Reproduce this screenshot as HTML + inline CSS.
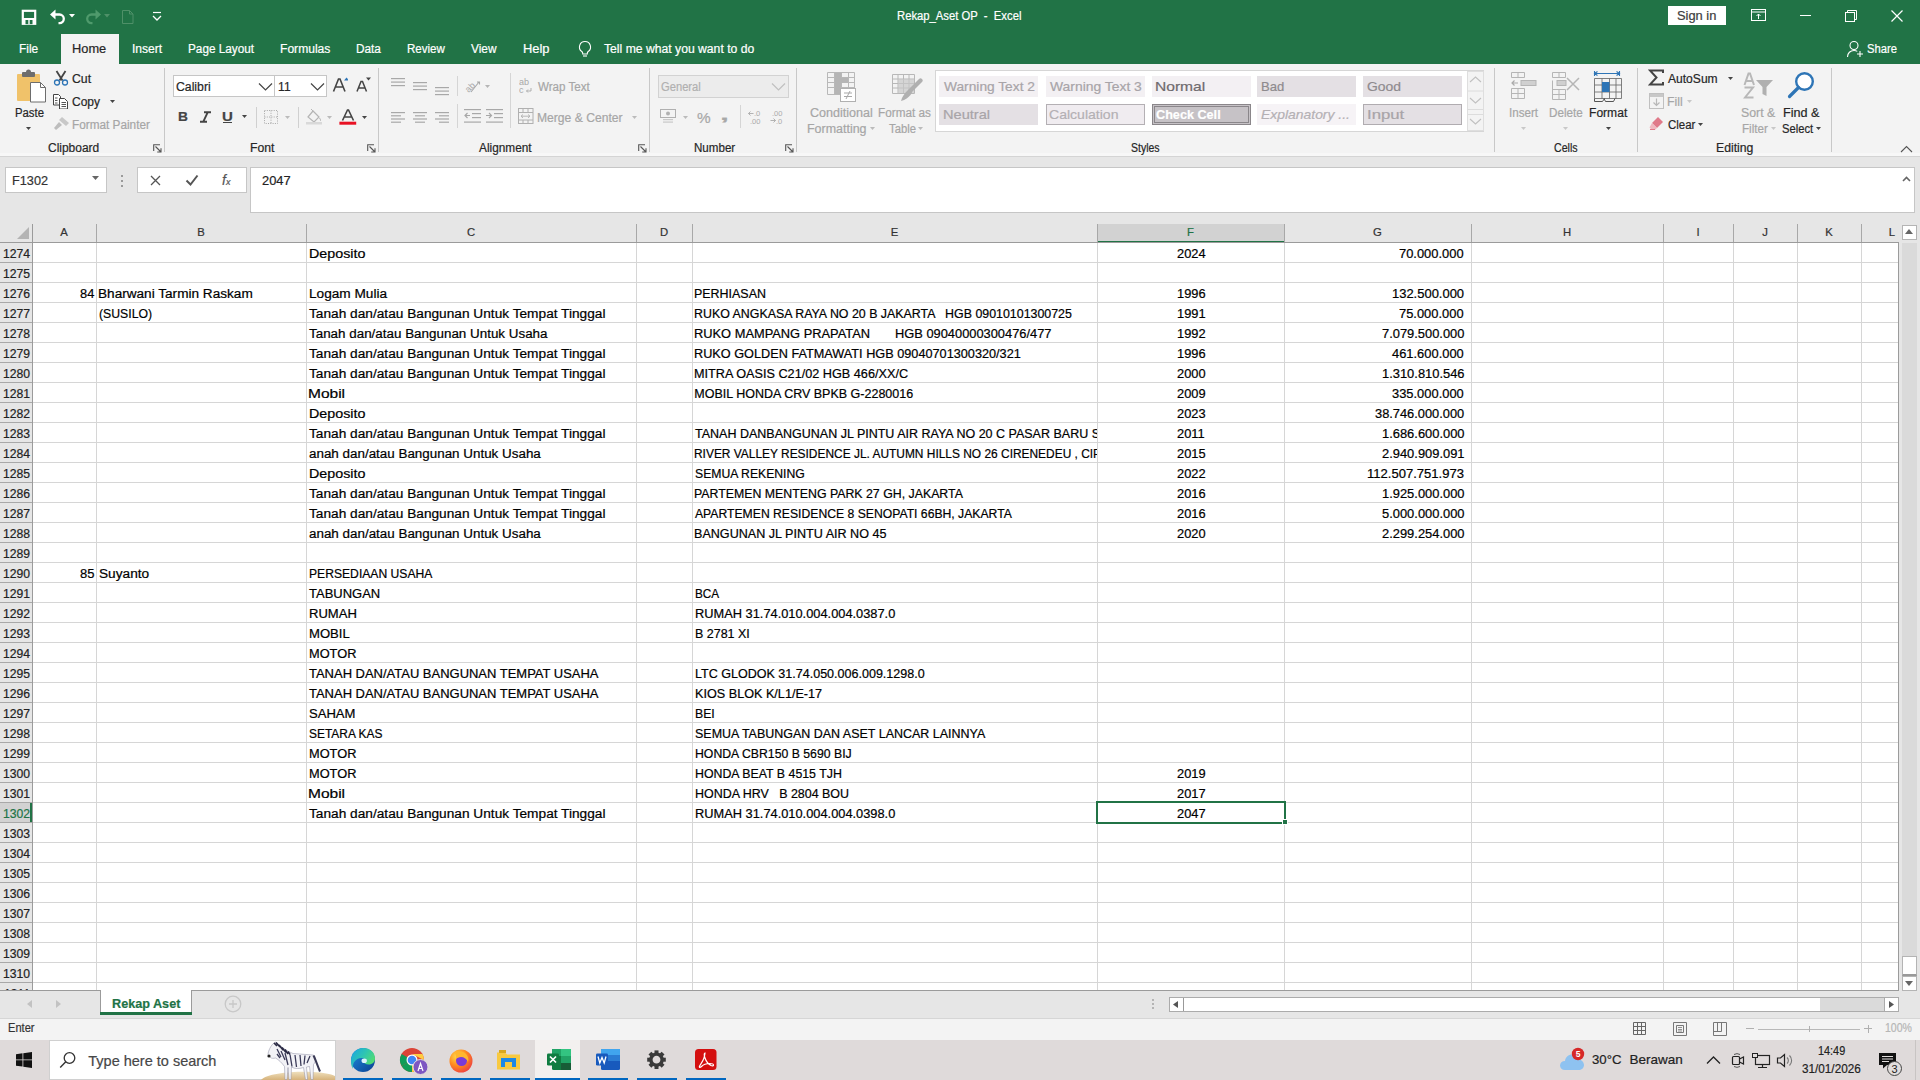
<!DOCTYPE html><html><head><meta charset="utf-8"><title>Rekap_Aset OP - Excel</title><style>*{margin:0;padding:0}html,body{width:1920px;height:1080px;overflow:hidden;background:#fff}body{position:relative;font-family:"Liberation Sans",sans-serif}.b{position:absolute;display:block}.t{position:absolute;white-space:nowrap;-webkit-text-stroke:0.2px currentColor}</style></head><body><div class="b" style="left:0px;top:0px;width:1920px;height:64px;background:#217346"></div>
<svg class="b" style="left:20px;top:8px" width="18" height="18" viewBox="0 0 18 18"><rect x="2.8" y="2.8" width="12.4" height="13" fill="none" stroke="#fff" stroke-width="2.2"/><rect x="2.5" y="10" width="13" height="6" fill="#fff"/><rect x="5.5" y="12" width="7" height="4.2" fill="#217346"/><rect x="8.3" y="12" width="1.4" height="4.2" fill="#fff"/></svg>
<svg class="b" style="left:49px;top:8px" width="18" height="18" viewBox="0 0 18 18"><path d="M5 6.5h5.5a4.3 4.3 0 0 1 0 8.6H9.5" fill="none" stroke="#fff" stroke-width="2.3"/><path d="M1 6.5L6.5 1.5v10z" fill="#fff"/></svg>
<svg class="b" style="left:69px;top:14px" width="8" height="5" viewBox="0 0 8 5"><path d="M0 0h6l-3 3.5z" fill="#fff"/></svg>
<svg class="b" style="left:84px;top:8px" width="18" height="18" viewBox="0 0 18 18"><path d="M13 6.5H7.5a4.3 4.3 0 0 0 0 8.6H8.5" fill="none" stroke="#4f9a6c" stroke-width="2.3"/><path d="M17 6.5L11.5 1.5v10z" fill="#4f9a6c"/></svg>
<svg class="b" style="left:104px;top:14px" width="8" height="5" viewBox="0 0 8 5"><path d="M0 0h6l-3 3.5z" fill="#4f9068"/></svg>
<svg class="b" style="left:121px;top:9px" width="14" height="16" viewBox="0 0 14 16"><path d="M1.5 1.5h7l3.5 3.5v9.5h-10.5z M8.5 1.5v3.5h3.5" fill="none" stroke="#4f9068" stroke-width="1"/></svg>
<svg class="b" style="left:151px;top:11px" width="12" height="12" viewBox="0 0 12 12"><path d="M2 1.5h8" stroke="#fff" stroke-width="1.2"/><path d="M2 5l4 4 4-4" fill="none" stroke="#fff" stroke-width="1.3"/></svg>
<div id="t1" class="t" style="left:897.11px;top:10.34px;font-size:12.00px;line-height:12.00px;color:#fff;font-weight:normal;transform:scaleX(0.9389);transform-origin:0 0;">Rekap_Aset OP &nbsp;- &nbsp;Excel</div>
<div class="b" style="left:1668px;top:6px;width:58px;height:19px;background:#fff"></div>
<div id="t2" class="t" style="left:1677.46px;top:9.84px;font-size:12.00px;line-height:12.00px;color:#404040;font-weight:normal;transform:scaleX(1.0729);transform-origin:0 0;">Sign in</div>
<svg class="b" style="left:1750px;top:8px" width="18" height="14" viewBox="0 0 18 14"><rect x="1.5" y="1.5" width="14" height="11" fill="none" stroke="#fff" stroke-width="1"/><path d="M1.5 4h14" stroke="#fff"/><path d="M8.5 11V6M6.5 8l2-2 2 2" fill="none" stroke="#fff" stroke-width="1"/></svg>
<div class="b" style="left:1800px;top:15px;width:11px;height:1px;background:#fff"></div>
<svg class="b" style="left:1844px;top:9px" width="14" height="14" viewBox="0 0 14 14"><rect x="1.5" y="3.5" width="9" height="9" fill="none" stroke="#fff"/><path d="M3.5 3.5V1.5h9v9h-2" fill="none" stroke="#fff"/></svg>
<svg class="b" style="left:1890px;top:9px" width="14" height="14" viewBox="0 0 14 14"><path d="M1.5 1.5l11 11M12.5 1.5l-11 11" stroke="#fff" stroke-width="1.2"/></svg>
<div class="b" style="left:61px;top:34px;width:58px;height:30px;background:#f3f3f3"></div>
<div id="t3" class="t" style="left:19.36px;top:42.84px;font-size:12.00px;line-height:12.00px;color:#fff;font-weight:normal;transform:scaleX(0.9909);transform-origin:0 0;">File</div>
<div id="t4" class="t" style="left:72.39px;top:42.84px;font-size:12.00px;line-height:12.00px;color:#262626;font-weight:normal;transform:scaleX(1.0676);transform-origin:0 0;">Home</div>
<div id="t5" class="t" style="left:131.89px;top:42.84px;font-size:12.00px;line-height:12.00px;color:#fff;font-weight:normal;transform:scaleX(1.0060);transform-origin:0 0;">Insert</div>
<div id="t6" class="t" style="left:188.07px;top:42.84px;font-size:12.00px;line-height:12.00px;color:#fff;font-weight:normal;transform:scaleX(0.9796);transform-origin:0 0;">Page Layout</div>
<div id="t7" class="t" style="left:280.04px;top:42.84px;font-size:12.00px;line-height:12.00px;color:#fff;font-weight:normal;transform:scaleX(1.0070);transform-origin:0 0;">Formulas</div>
<div id="t8" class="t" style="left:356.07px;top:42.84px;font-size:12.00px;line-height:12.00px;color:#fff;font-weight:normal;transform:scaleX(0.9826);transform-origin:0 0;">Data</div>
<div id="t9" class="t" style="left:407.09px;top:42.84px;font-size:12.00px;line-height:12.00px;color:#fff;font-weight:normal;transform:scaleX(0.9628);transform-origin:0 0;">Review</div>
<div id="t10" class="t" style="left:471.45px;top:42.84px;font-size:12.00px;line-height:12.00px;color:#fff;font-weight:normal;transform:scaleX(0.9893);transform-origin:0 0;">View</div>
<div id="t11" class="t" style="left:522.98px;top:42.84px;font-size:12.00px;line-height:12.00px;color:#fff;font-weight:normal;transform:scaleX(1.0750);transform-origin:0 0;">Help</div>
<svg class="b" style="left:577px;top:40px" width="16" height="18" viewBox="0 0 16 18"><path d="M8 1.5a5.5 5.5 0 0 0-3.2 10c.6.5.9 1.1.9 1.8v.7h4.6v-.7c0-.7.3-1.3.9-1.8A5.5 5.5 0 0 0 8 1.5z" fill="none" stroke="#fff" stroke-width="1.1"/><path d="M6 16h4" stroke="#fff" stroke-width="1.1"/></svg>
<div id="t12" class="t" style="left:604.25px;top:42.84px;font-size:12.00px;line-height:12.00px;color:#fff;font-weight:normal;transform:scaleX(1.0146);transform-origin:0 0;">Tell me what you want to do</div>
<svg class="b" style="left:1846px;top:40px" width="18" height="18" viewBox="0 0 18 18"><circle cx="8" cy="5.5" r="4" fill="none" stroke="#fff" stroke-width="1.1"/><path d="M1.5 17c0-4 2.8-6.5 6.5-6.5 1.3 0 2.4.3 3.3.9" fill="none" stroke="#fff" stroke-width="1.1"/><path d="M14 11v6M11 14h6" stroke="#fff" stroke-width="1.1"/></svg>
<div id="t13" class="t" style="left:1866.53px;top:42.84px;font-size:12.00px;line-height:12.00px;color:#fff;font-weight:normal;transform:scaleX(0.9356);transform-origin:0 0;">Share</div>
<div class="b" style="left:0px;top:64px;width:1920px;height:92px;background:#f3f3f3"></div>
<div class="b" style="left:0px;top:153px;width:1920px;height:3px;background:#f7f7f7"></div>
<div class="b" style="left:0px;top:156px;width:1920px;height:1px;background:#d4d4d4"></div>
<div class="b" style="left:164px;top:68px;width:1px;height:84px;background:#c8c8c8"></div>
<div class="b" style="left:378px;top:68px;width:1px;height:84px;background:#c8c8c8"></div>
<div class="b" style="left:649px;top:68px;width:1px;height:84px;background:#c8c8c8"></div>
<div class="b" style="left:796px;top:68px;width:1px;height:84px;background:#c8c8c8"></div>
<div class="b" style="left:1494px;top:68px;width:1px;height:84px;background:#c8c8c8"></div>
<div class="b" style="left:1637px;top:68px;width:1px;height:84px;background:#c8c8c8"></div>
<div class="b" style="left:1831px;top:68px;width:1px;height:84px;background:#c8c8c8"></div>
<div id="t14" class="t" style="left:47.90px;top:141.84px;font-size:12.00px;line-height:12.00px;color:#262626;font-weight:normal;transform:scaleX(0.9972);transform-origin:0 0;">Clipboard</div>
<div id="t15" class="t" style="left:250.33px;top:141.84px;font-size:12.00px;line-height:12.00px;color:#262626;font-weight:normal;transform:scaleX(1.0184);transform-origin:0 0;">Font</div>
<div id="t16" class="t" style="left:479.30px;top:141.84px;font-size:12.00px;line-height:12.00px;color:#262626;font-weight:normal;transform:scaleX(0.9854);transform-origin:0 0;">Alignment</div>
<div id="t17" class="t" style="left:693.78px;top:141.84px;font-size:12.00px;line-height:12.00px;color:#262626;font-weight:normal;transform:scaleX(0.9655);transform-origin:0 0;">Number</div>
<div id="t18" class="t" style="left:1131.16px;top:141.84px;font-size:12.00px;line-height:12.00px;color:#262626;font-weight:normal;transform:scaleX(0.8748);transform-origin:0 0;">Styles</div>
<div id="t19" class="t" style="left:1554.17px;top:141.84px;font-size:12.00px;line-height:12.00px;color:#262626;font-weight:normal;transform:scaleX(0.8881);transform-origin:0 0;">Cells</div>
<div id="t20" class="t" style="left:1715.63px;top:141.84px;font-size:12.00px;line-height:12.00px;color:#262626;font-weight:normal;transform:scaleX(1.0195);transform-origin:0 0;">Editing</div>
<svg class="b" style="left:153px;top:144px" width="9" height="9" viewBox="0 0 9 9"><path d="M.7 7V.7H7" fill="none" stroke="#555" stroke-width="1.1"/><path d="M2.5 2.5l5 5M8 4.2V8H4.2" fill="none" stroke="#555" stroke-width="1.1"/></svg>
<svg class="b" style="left:367px;top:144px" width="9" height="9" viewBox="0 0 9 9"><path d="M.7 7V.7H7" fill="none" stroke="#555" stroke-width="1.1"/><path d="M2.5 2.5l5 5M8 4.2V8H4.2" fill="none" stroke="#555" stroke-width="1.1"/></svg>
<svg class="b" style="left:638px;top:144px" width="9" height="9" viewBox="0 0 9 9"><path d="M.7 7V.7H7" fill="none" stroke="#555" stroke-width="1.1"/><path d="M2.5 2.5l5 5M8 4.2V8H4.2" fill="none" stroke="#555" stroke-width="1.1"/></svg>
<svg class="b" style="left:785px;top:144px" width="9" height="9" viewBox="0 0 9 9"><path d="M.7 7V.7H7" fill="none" stroke="#555" stroke-width="1.1"/><path d="M2.5 2.5l5 5M8 4.2V8H4.2" fill="none" stroke="#555" stroke-width="1.1"/></svg>
<svg class="b" style="left:15px;top:69px" width="32" height="34" viewBox="0 0 32 34"><rect x="2" y="5" width="23" height="27" rx="1" fill="#f0c26a"/><rect x="7" y="3" width="13" height="5" rx="1" fill="#6d6d6d"/><circle cx="13.5" cy="3" r="2.5" fill="#6d6d6d"/><path d="M15.5 13.5h10l5 5v14.5h-15z" fill="#fff" stroke="#6d6d6d" stroke-width="1"/><path d="M25.5 13.5v5h5" fill="none" stroke="#6d6d6d" stroke-width="1"/></svg>
<div id="t21" class="t" style="left:14.50px;top:106.84px;font-size:12.00px;line-height:12.00px;color:#262626;font-weight:normal;transform:scaleX(0.9448);transform-origin:0 0;">Paste</div>
<svg class="b" style="left:26px;top:127px" width="6" height="4" viewBox="0 0 6 4"><path d="M0 0h5l-2.5 3z" fill="#444"/></svg>
<svg class="b" style="left:53px;top:70px" width="16" height="16" viewBox="0 0 16 16"><path d="M3.5 1l6 9.5M12.5 1l-6 9.5" stroke="#444" stroke-width="1.8"/><circle cx="4" cy="12.5" r="2.5" fill="none" stroke="#2e75b6" stroke-width="1.3"/><circle cx="12" cy="12.5" r="2.5" fill="none" stroke="#2e75b6" stroke-width="1.3"/></svg>
<div id="t22" class="t" style="left:71.99px;top:73.04px;font-size:12.00px;line-height:12.00px;color:#262626;font-weight:normal;transform:scaleX(1.0228);transform-origin:0 0;">Cut</div>
<svg class="b" style="left:53px;top:93px" width="16" height="16" viewBox="0 0 16 16"><path d="M.5 1.5h5l2 2v8.5H.5z" fill="#fff" stroke="#444"/><path d="M6.5 5.5h5l3 3v7.5h-8z" fill="#fff" stroke="#444"/><path d="M2 5h2.5M2 7.5h2.5M2 10h2.5M8.5 9.5h4.5M8.5 11.5h4.5M8.5 13.5h4.5" stroke="#444" stroke-width=".9"/></svg>
<div id="t23" class="t" style="left:72.00px;top:95.84px;font-size:12.00px;line-height:12.00px;color:#262626;font-weight:normal;">Copy</div>
<svg class="b" style="left:110px;top:100px" width="6" height="4" viewBox="0 0 6 4"><path d="M0 0h5l-2.5 3z" fill="#444"/></svg>
<svg class="b" style="left:53px;top:116px" width="17" height="15" viewBox="0 0 17 15"><path d="M9 1l7 6-3 3-7-6z" fill="#c8c8c8"/><path d="M6 6l-5 6 2 2 6-5z" fill="#bdbdbd"/></svg>
<div id="t24" class="t" style="left:71.67px;top:118.74px;font-size:12.00px;line-height:12.00px;color:#a6a6a6;font-weight:normal;transform:scaleX(0.9819);transform-origin:0 0;">Format Painter</div>
<div class="b" style="left:173px;top:75px;width:102px;height:22px;background:#fff;border:1px solid #c6c6c6;box-sizing:border-box"></div>
<div class="b" style="left:274px;top:75px;width:53px;height:22px;background:#fff;border:1px solid #c6c6c6;box-sizing:border-box"></div>
<div id="t25" class="t" style="left:175.89px;top:80.84px;font-size:12.00px;line-height:12.00px;color:#262626;font-weight:normal;transform:scaleX(1.0202);transform-origin:0 0;">Calibri</div>
<div id="t26" class="t" style="left:278.10px;top:80.84px;font-size:12.00px;line-height:12.00px;color:#262626;font-weight:normal;">11</div>
<svg class="b" style="left:258px;top:82px" width="15" height="10" viewBox="0 0 15 10"><path d="M1 1.5l6.5 6.5 6.5-6.5" fill="none" stroke="#444" stroke-width="1.2"/></svg>
<svg class="b" style="left:309.7px;top:82px" width="15" height="10" viewBox="0 0 15 10"><path d="M1 1.5l6.5 6.5 6.5-6.5" fill="none" stroke="#444" stroke-width="1.2"/></svg>
<svg class="b" style="left:332px;top:76px" width="16" height="17" viewBox="0 0 16 17"><path d="M1.5 15.5l5-12.5h1.5l5 12.5M3.5 11h8" fill="none" stroke="#444" stroke-width="1.6"/><path d="M12 4.5l2.5-3 2.5 3z" fill="#2e75b6"/></svg>
<svg class="b" style="left:355px;top:76px" width="16" height="17" viewBox="0 0 16 17"><path d="M2 15.5l4-10h1.5l4 10M3.8 12h6" fill="none" stroke="#444" stroke-width="1.5"/><path d="M11 1.5h5l-2.5 3z" fill="#444"/></svg>
<div id="t27" class="t" style="left:178.14px;top:110.00px;font-size:13.00px;line-height:13.00px;color:#444;font-weight:normal;transform:scaleX(1.0585);transform-origin:0 0;"><b>B</b></div>
<svg class="b" style="left:199px;top:111px" width="13" height="12" viewBox="0 0 13 12"><path d="M5 1.2h7M1 10.8h7M8.8 1.2L4.2 10.8" fill="none" stroke="#444" stroke-width="1.9"/></svg>
<div id="t28" class="t" style="left:222.29px;top:110.00px;font-size:13.00px;line-height:13.00px;color:#444;font-weight:normal;transform:scaleX(1.1569);transform-origin:0 0;"><b>U</b></div>
<div class="b" style="left:222.6px;top:122px;width:9.4px;height:1.3px;background:#444"></div>
<svg class="b" style="left:242px;top:115px" width="6" height="4" viewBox="0 0 6 4"><path d="M0 0h5l-2.5 3z" fill="#444"/></svg>
<div class="b" style="left:255.5px;top:106.5px;width:1px;height:21px;background:#d0d0d0"></div>
<svg class="b" style="left:264px;top:110px" width="14" height="14" viewBox="0 0 14 14"><path d="M.5 .5h13v13H.5zM7 .5v13M.5 7h13" fill="none" stroke="#a8a8a8" stroke-width="1" stroke-dasharray="1 1.3"/></svg>
<svg class="b" style="left:285px;top:116px" width="6" height="4" viewBox="0 0 6 4"><path d="M0 0h5l-2.5 3z" fill="#bbb"/></svg>
<div class="b" style="left:298px;top:106.5px;width:1px;height:21px;background:#d0d0d0"></div>
<svg class="b" style="left:305px;top:108px" width="18" height="17" viewBox="0 0 18 17"><path d="M3 9l5-6 6 6-5 5z" fill="none" stroke="#b5b5b5" stroke-width="1.2"/><path d="M8 3l-2-2" stroke="#b5b5b5"/><path d="M14.5 10c1 1.5 1.5 2.5.5 3" fill="none" stroke="#b5b5b5"/><rect x="1" y="14" width="16" height="2.5" fill="#d9d9d9"/></svg>
<svg class="b" style="left:327px;top:116px" width="6" height="4" viewBox="0 0 6 4"><path d="M0 0h5l-2.5 3z" fill="#bbb"/></svg>
<svg class="b" style="left:339px;top:109px" width="18" height="16" viewBox="0 0 18 16"><path d="M3.5 11.5l5-10.5h1l5 10.5M5.5 8h7" fill="none" stroke="#444" stroke-width="1.6"/><rect x="0.4" y="12.7" width="16.8" height="3" fill="#e81123"/></svg>
<svg class="b" style="left:361.8px;top:116px" width="6" height="4" viewBox="0 0 6 4"><path d="M0 0h5l-2.5 3z" fill="#444"/></svg>
<svg class="b" style="left:391px;top:77.5px" width="16" height="12" viewBox="0 0 16 12"><rect x="0" y="0.0" width="14" height="1.2" fill="#a8a8a8"/><rect x="0" y="3.5" width="14" height="1.2" fill="#a8a8a8"/><rect x="0" y="7.0" width="14" height="1.2" fill="#a8a8a8"/></svg>
<svg class="b" style="left:413px;top:82px" width="16" height="12" viewBox="0 0 16 12"><rect x="0" y="0.0" width="14" height="1.2" fill="#a8a8a8"/><rect x="0" y="3.5" width="14" height="1.2" fill="#a8a8a8"/><rect x="0" y="7.0" width="14" height="1.2" fill="#a8a8a8"/></svg>
<svg class="b" style="left:435px;top:86.5px" width="16" height="12" viewBox="0 0 16 12"><rect x="0" y="0.0" width="14" height="1.2" fill="#a8a8a8"/><rect x="0" y="3.5" width="14" height="1.2" fill="#a8a8a8"/><rect x="0" y="7.0" width="14" height="1.2" fill="#a8a8a8"/></svg>
<div class="b" style="left:457px;top:76px;width:1px;height:20px;background:#d5d5d5"></div>
<svg class="b" style="left:464px;top:77px" width="28" height="17" viewBox="0 0 28 17"><text x="0" y="13" font-family="Liberation Sans" font-size="9" fill="#a8a8a8" transform="rotate(-45 6 9)">ab</text><path d="M7 15l8-10M13 5h2.5v2.5" fill="none" stroke="#a8a8a8" stroke-width="1.1"/><path d="M21 8h5l-2.5 3z" fill="#b5b5b5"/></svg>
<svg class="b" style="left:391px;top:112px" width="16" height="14" viewBox="0 0 16 14"><rect x="0" y="0.0" width="14" height="1.2" fill="#a8a8a8"/><rect x="0" y="3.2" width="10" height="1.2" fill="#a8a8a8"/><rect x="0" y="6.4" width="14" height="1.2" fill="#a8a8a8"/><rect x="0" y="9.600000000000001" width="10" height="1.2" fill="#a8a8a8"/></svg>
<svg class="b" style="left:413px;top:112px" width="16" height="14" viewBox="0 0 16 14"><rect x="0" y="0.0" width="14" height="1.2" fill="#a8a8a8"/><rect x="2" y="3.2" width="10" height="1.2" fill="#a8a8a8"/><rect x="0" y="6.4" width="14" height="1.2" fill="#a8a8a8"/><rect x="2" y="9.600000000000001" width="10" height="1.2" fill="#a8a8a8"/></svg>
<svg class="b" style="left:435px;top:112px" width="16" height="14" viewBox="0 0 16 14"><rect x="0" y="0.0" width="14" height="1.2" fill="#a8a8a8"/><rect x="4" y="3.2" width="10" height="1.2" fill="#a8a8a8"/><rect x="0" y="6.4" width="14" height="1.2" fill="#a8a8a8"/><rect x="4" y="9.600000000000001" width="10" height="1.2" fill="#a8a8a8"/></svg>
<div class="b" style="left:457px;top:104px;width:1px;height:24px;background:#d5d5d5"></div>
<svg class="b" style="left:464px;top:109px" width="42" height="15" viewBox="0 0 42 15"><rect x="0" y="0" width="17" height="1.2" fill="#a8a8a8"/><rect x="8" y="4" width="9" height="1.2" fill="#a8a8a8"/><rect x="8" y="8" width="9" height="1.2" fill="#a8a8a8"/><rect x="0" y="12.5" width="17" height="1.2" fill="#a8a8a8"/><path d="M1 6.5h5M3.5 4l-2.5 2.5 2.5 2.5" fill="none" stroke="#a8a8a8" stroke-width="1.2"/><g transform="translate(22,0)"><rect x="0" y="0" width="17" height="1.2" fill="#a8a8a8"/><rect x="8" y="4" width="9" height="1.2" fill="#a8a8a8"/><rect x="8" y="8" width="9" height="1.2" fill="#a8a8a8"/><rect x="0" y="12.5" width="17" height="1.2" fill="#a8a8a8"/><path d="M0 6.5h5M3 4l2.5 2.5L3 9" fill="none" stroke="#a8a8a8" stroke-width="1.2"/></g></svg>
<div class="b" style="left:510px;top:73px;width:1px;height:55px;background:#d5d5d5"></div>
<svg class="b" style="left:519px;top:77px" width="15" height="17" viewBox="0 0 15 17"><text x="0" y="7.5" font-family="Liberation Sans" font-size="9" fill="#a8a8a8">ab</text><text x="0" y="15.5" font-family="Liberation Sans" font-size="9" fill="#a8a8a8">c</text><path d="M12 11v3H7.5M9 12.5l-1.5 1.5L9 15.5" fill="none" stroke="#a8a8a8" stroke-width=".9"/></svg>
<div id="t29" class="t" style="left:537.55px;top:81.24px;font-size:12.00px;line-height:12.00px;color:#a6a6a6;font-weight:normal;transform:scaleX(0.9653);transform-origin:0 0;">Wrap Text</div>
<svg class="b" style="left:518px;top:108px" width="16" height="17" viewBox="0 0 16 17"><rect x=".5" y=".5" width="14.5" height="15" fill="none" stroke="#b0b0b0"/><path d="M.5 4.5h14.5M.5 12h14.5M5 .5v4M10 .5v4M5 12v3.5M10 12v3.5" stroke="#b0b0b0"/><path d="M3 8.2h9M5 6.5l-2 1.7 2 1.7M10 6.5l2 1.7-2 1.7" fill="none" stroke="#b0b0b0" stroke-width=".9"/></svg>
<div id="t30" class="t" style="left:536.64px;top:112.24px;font-size:12.00px;line-height:12.00px;color:#a6a6a6;font-weight:normal;transform:scaleX(1.0101);transform-origin:0 0;">Merge &amp; Center</div>
<svg class="b" style="left:632px;top:116px" width="6" height="4" viewBox="0 0 6 4"><path d="M0 0h5l-2.5 3z" fill="#bbb"/></svg>
<div class="b" style="left:658px;top:75px;width:131px;height:23px;background:#ececec;border:1px solid #d2d2d2;box-sizing:border-box"></div>
<div id="t31" class="t" style="left:661.44px;top:80.64px;font-size:12.00px;line-height:12.00px;color:#b0b0b0;font-weight:normal;transform:scaleX(0.9316);transform-origin:0 0;">General</div>
<svg class="b" style="left:771px;top:82px" width="15" height="10" viewBox="0 0 15 10"><path d="M1 1.5l6.5 6.5 6.5-6.5" fill="none" stroke="#c0c0c0" stroke-width="1.2"/></svg>
<svg class="b" style="left:660px;top:109px" width="17" height="15" viewBox="0 0 17 15"><rect x=".5" y=".5" width="15" height="8" fill="none" stroke="#b0b0b0"/><circle cx="8" cy="4.5" r="2" fill="#b0b0b0"/><rect x="3" y="10" width="10" height="1.2" fill="#c8c8c8"/><rect x="3" y="12.5" width="10" height="1.2" fill="#c8c8c8"/></svg>
<svg class="b" style="left:683px;top:116px" width="6" height="4" viewBox="0 0 6 4"><path d="M0 0h5l-2.5 3z" fill="#bbb"/></svg>
<div id="t32" class="t" style="left:696.82px;top:110.65px;font-size:14.00px;line-height:14.00px;color:#a8a8a8;font-weight:normal;transform:scaleX(1.0954);transform-origin:0 0;">%</div>
<div id="t33" class="t" style="left:720.00px;top:108.15px;font-size:14.00px;line-height:14.00px;color:#a8a8a8;font-weight:normal;transform:scaleX(2.2857);transform-origin:0 0;"><b>,</b></div>
<div class="b" style="left:740px;top:104.5px;width:1px;height:23px;background:#d5d5d5"></div>
<svg class="b" style="left:748px;top:110px" width="15" height="14" viewBox="0 0 15 14"><text x="6" y="6" font-family="Liberation Sans" font-size="7.5" fill="#aaa">.0</text><text x="2" y="13.5" font-family="Liberation Sans" font-size="7.5" fill="#aaa">.00</text><path d="M.5 3.5h5M2.5 1.5l-2 2 2 2" fill="none" stroke="#aaa" stroke-width=".9"/></svg>
<svg class="b" style="left:770px;top:110px" width="15" height="14" viewBox="0 0 15 14"><text x="2" y="6" font-family="Liberation Sans" font-size="7.5" fill="#aaa">.00</text><text x="6" y="13.5" font-family="Liberation Sans" font-size="7.5" fill="#aaa">.0</text><path d="M.5 10.5h5M3.5 8.5l2 2-2 2" fill="none" stroke="#aaa" stroke-width=".9"/></svg>
<svg class="b" style="left:826px;top:71px" width="32" height="32" viewBox="0 0 32 32"><path d="M1.5 1.5h27v22h-27zM1.5 6.5h27M1.5 11.5h27M1.5 16.5h27M8.5 1.5v22M15.5 1.5v22M22.5 1.5v22" fill="none" stroke="#b8b8b8" stroke-width="1"/><rect x="9" y="2" width="6" height="21" fill="#b5b5b5"/><rect x="15" y="7" width="7" height="5" fill="#b5b5b5"/><rect x="14.5" y="17.5" width="15" height="13" fill="#fff" stroke="#b0b0b0"/><path d="M18 22h8M18 25.5h8M24 20l-4 8" stroke="#a8a8a8" stroke-width="1"/></svg>
<div id="t34" class="t" style="left:809.67px;top:107.34px;font-size:12.00px;line-height:12.00px;color:#a6a6a6;font-weight:normal;transform:scaleX(1.0447);transform-origin:0 0;">Conditional</div>
<div id="t35" class="t" style="left:806.51px;top:122.54px;font-size:12.00px;line-height:12.00px;color:#a6a6a6;font-weight:normal;transform:scaleX(1.0381);transform-origin:0 0;">Formatting</div>
<svg class="b" style="left:870px;top:127px" width="6" height="4" viewBox="0 0 6 4"><path d="M0 0h5l-2.5 3z" fill="#bbb"/></svg>
<svg class="b" style="left:891px;top:73px" width="32" height="30" viewBox="0 0 32 30"><path d="M1.5 1.5h22v19h-22zM1.5 6h22M1.5 10.5h22M1.5 15h22M7 1.5v19M12.5 1.5v19M18 1.5v19" fill="none" stroke="#b8b8b8" stroke-width="1"/><rect x="7" y="6" width="16" height="14" fill="#c8c8c8" opacity=".7"/><path d="M29.5 7.5L19 18" stroke="#b0b0b0" stroke-width="4.2" stroke-linecap="round"/><path d="M18 16.5l3 3-1.5 2.5c-2 2.5-5 5-9.5 6 1-4 3.5-7.5 6-10z" fill="#b0b0b0"/></svg>
<div id="t36" class="t" style="left:878.47px;top:107.34px;font-size:12.00px;line-height:12.00px;color:#a6a6a6;font-weight:normal;transform:scaleX(0.9798);transform-origin:0 0;">Format as</div>
<div id="t37" class="t" style="left:888.52px;top:122.54px;font-size:12.00px;line-height:12.00px;color:#a6a6a6;font-weight:normal;transform:scaleX(0.9386);transform-origin:0 0;">Table</div>
<svg class="b" style="left:918px;top:127px" width="6" height="4" viewBox="0 0 6 4"><path d="M0 0h5l-2.5 3z" fill="#bbb"/></svg>
<div class="b" style="left:935px;top:70px;width:549px;height:62px;background:#fff;border:1px solid #d6d6d6;box-sizing:border-box"></div>
<div class="b" style="left:939px;top:76px;width:99px;height:21px;background:#f3f0f3;box-sizing:border-box"></div>
<div class="b" style="left:1046px;top:76px;width:99px;height:21px;background:#f3f0f3;box-sizing:border-box"></div>
<div class="b" style="left:1152px;top:76px;width:99px;height:21px;background:#f3f0f3;box-sizing:border-box"></div>
<div class="b" style="left:1257px;top:76px;width:99px;height:21px;background:#e4e0e4;box-sizing:border-box"></div>
<div class="b" style="left:1363px;top:76px;width:99px;height:21px;background:#e4e0e4;box-sizing:border-box"></div>
<div class="b" style="left:939px;top:104px;width:99px;height:21px;background:#e4e0e4;box-sizing:border-box"></div>
<div class="b" style="left:1046px;top:104px;width:99px;height:21px;background:#f0ecf0;border:1px solid #b4b0b4;box-sizing:border-box"></div>
<div class="b" style="left:1152px;top:104px;width:99px;height:21px;background:#c6c2c6;border:3px double #8a868a;box-sizing:border-box"></div>
<div class="b" style="left:1257px;top:104px;width:99px;height:21px;background:#f6f3f6;box-sizing:border-box"></div>
<div class="b" style="left:1363px;top:104px;width:99px;height:21px;background:#e4e0e4;border:1px solid #b0acb0;box-sizing:border-box"></div>
<div id="t38" class="t" style="left:943.90px;top:79.90px;font-size:13.00px;line-height:13.00px;color:#a8a4a8;font-weight:normal;transform:scaleX(1.0573);transform-origin:0 0;">Warning Text 2</div>
<div id="t39" class="t" style="left:1050.10px;top:79.90px;font-size:13.00px;line-height:13.00px;color:#a8a4a8;font-weight:normal;transform:scaleX(1.0678);transform-origin:0 0;">Warning Text 3</div>
<div id="t40" class="t" style="left:1154.88px;top:79.90px;font-size:13.00px;line-height:13.00px;color:#6e6a6e;font-weight:normal;transform:scaleX(1.1993);transform-origin:0 0;">Normal</div>
<div id="t41" class="t" style="left:1260.68px;top:79.90px;font-size:13.00px;line-height:13.00px;color:#8e8a8e;font-weight:normal;transform:scaleX(1.0054);transform-origin:0 0;">Bad</div>
<div id="t42" class="t" style="left:1367.25px;top:79.90px;font-size:13.00px;line-height:13.00px;color:#8e8a8e;font-weight:normal;transform:scaleX(1.0669);transform-origin:0 0;">Good</div>
<div id="t43" class="t" style="left:942.76px;top:107.70px;font-size:13.00px;line-height:13.00px;color:#a8a4a8;font-weight:normal;transform:scaleX(1.1240);transform-origin:0 0;">Neutral</div>
<div id="t44" class="t" style="left:1049.44px;top:107.70px;font-size:13.00px;line-height:13.00px;color:#b4b0b4;font-weight:normal;transform:scaleX(1.0798);transform-origin:0 0;">Calculation</div>
<div id="t45" class="t" style="left:1155.70px;top:107.70px;font-size:13.00px;line-height:13.00px;color:#fff;font-weight:bold;transform:scaleX(0.9725);transform-origin:0 0;">Check Cell</div>
<div id="t46" class="t" style="left:1261.48px;top:107.70px;font-size:13.00px;line-height:13.00px;color:#b4b0b4;font-weight:normal;font-style:italic;transform:scaleX(1.0699);transform-origin:0 0;">Explanatory ...</div>
<div id="t47" class="t" style="left:1366.59px;top:107.70px;font-size:13.00px;line-height:13.00px;color:#a8a4a8;font-weight:normal;transform:scaleX(1.2884);transform-origin:0 0;">Input</div>
<svg class="b" style="left:1467px;top:71px" width="17" height="60" viewBox="0 0 17 60"><rect x=".5" y=".5" width="16" height="59" fill="#f3f3f3" stroke="#dedede"/><path d="M3 11l5.5-5 5.5 5" fill="none" stroke="#c0c0c0" stroke-width="1.1"/><path d="M1 20h15" stroke="#dcdcdc"/><path d="M3 27l5.5 5 5.5-5" fill="none" stroke="#c0c0c0" stroke-width="1.1"/><path d="M1 38.5h15M1 43.5h15" stroke="#dcdcdc"/><path d="M3 48l5.5 5 5.5-5" fill="none" stroke="#c0c0c0" stroke-width="1.1"/></svg>
<svg class="b" style="left:1510px;top:71px" width="30" height="30" viewBox="0 0 30 30"><path d="M1.5 1.5h13v5h-13zM8 1.5v5" fill="none" stroke="#b5b5b5"/><rect x="11" y="9.5" width="15" height="5" fill="#d0d0d0" stroke="#b5b5b5"/><path d="M8 12h-6M4.5 9.5L2 12l2.5 2.5" fill="none" stroke="#aaa" stroke-width="1.2"/><path d="M1.5 17.5h13v10h-13zM1.5 22.5h13M8 17.5v10" fill="none" stroke="#b5b5b5"/></svg>
<div id="t48" class="t" style="left:1508.64px;top:106.54px;font-size:12.00px;line-height:12.00px;color:#a6a6a6;font-weight:normal;transform:scaleX(0.9678);transform-origin:0 0;">Insert</div>
<svg class="b" style="left:1521px;top:127px" width="6" height="4" viewBox="0 0 6 4"><path d="M0 0h5l-2.5 3z" fill="#c8c8c8"/></svg>
<svg class="b" style="left:1551px;top:71px" width="32" height="31" viewBox="0 0 32 31"><path d="M1.5 1.5h13v5h-13zM8 1.5v5" fill="none" stroke="#b5b5b5"/><rect x="6" y="9.5" width="9" height="5" fill="#d0d0d0" stroke="#b5b5b5"/><path d="M1.5 18.5h13v10h-13zM1.5 23.5h13M8 18.5v10M1.5 9.5v10" fill="none" stroke="#b5b5b5"/><path d="M16 7l12 12M28 7L16 19" stroke="#b5b5b5" stroke-width="1.5"/></svg>
<div id="t49" class="t" style="left:1548.68px;top:106.54px;font-size:12.00px;line-height:12.00px;color:#a6a6a6;font-weight:normal;transform:scaleX(0.9725);transform-origin:0 0;">Delete</div>
<svg class="b" style="left:1562.7px;top:127px" width="6" height="4" viewBox="0 0 6 4"><path d="M0 0h5l-2.5 3z" fill="#c8c8c8"/></svg>
<svg class="b" style="left:1593px;top:70px" width="31" height="33" viewBox="0 0 31 33"><path d="M1.5 3.5h25M1.5 1v5M26.5 1v5M4.5 1.5l-3 2 3 2M23.5 1.5l3 2-3 2" fill="none" stroke="#2e75b6" stroke-width="1.1"/><path d="M1.5 8.5h27v20h-27zM1.5 15h27M1.5 22h27M9 8.5v20M16.5 8.5v20M23 8.5v20" fill="none" stroke="#6a6a6a" stroke-width=".85"/><rect x="9" y="12" width="7.5" height="10" fill="#2e75b6"/><path d="M1.5 28.5v3h8l2-3M11 28.5l1.5 3h8l1.5-3" fill="none" stroke="#555"/></svg>
<div id="t50" class="t" style="left:1588.54px;top:106.54px;font-size:12.00px;line-height:12.00px;color:#262626;font-weight:normal;transform:scaleX(1.0062);transform-origin:0 0;">Format</div>
<svg class="b" style="left:1606px;top:127px" width="6" height="4" viewBox="0 0 6 4"><path d="M0 0h5l-2.5 3z" fill="#444"/></svg>
<svg class="b" style="left:1648px;top:69px" width="17" height="17" viewBox="0 0 17 17"><path d="M15 4V1.5H2l6.5 7-6.5 7h13V13" fill="none" stroke="#444" stroke-width="2"/></svg>
<div id="t51" class="t" style="left:1668.40px;top:72.94px;font-size:12.00px;line-height:12.00px;color:#262626;font-weight:normal;transform:scaleX(1.0059);transform-origin:0 0;">AutoSum</div>
<svg class="b" style="left:1728px;top:76.5px" width="6" height="4" viewBox="0 0 6 4"><path d="M0 0h5l-2.5 3z" fill="#444"/></svg>
<svg class="b" style="left:1649px;top:93px" width="16" height="16" viewBox="0 0 16 16"><rect x=".5" y=".5" width="14" height="15" fill="none" stroke="#c0c0c0"/><rect x="1" y="1" width="13" height="3" fill="#c8c8c8"/><path d="M7.5 5.5v7M4.5 9.5l3 3 3-3" fill="none" stroke="#b8b8b8" stroke-width="1.2"/></svg>
<div id="t52" class="t" style="left:1667.43px;top:95.59px;font-size:12.00px;line-height:12.00px;color:#a6a6a6;font-weight:normal;transform:scaleX(1.0211);transform-origin:0 0;">Fill</div>
<svg class="b" style="left:1686.7px;top:100px" width="6" height="4" viewBox="0 0 6 4"><path d="M0 0h5l-2.5 3z" fill="#c8c8c8"/></svg>
<svg class="b" style="left:1649px;top:116px" width="15" height="14" viewBox="0 0 15 14"><path d="M9 1l5 5-6 6-5-5z" fill="#e07a8a"/><path d="M3 7l5 5-1.5 1.5h-4l-2-2z" fill="#f0b8c0"/><path d="M1 13.5h5" stroke="#e07a8a" stroke-width="1"/></svg>
<div id="t53" class="t" style="left:1667.83px;top:118.84px;font-size:12.00px;line-height:12.00px;color:#262626;font-weight:normal;transform:scaleX(0.9541);transform-origin:0 0;">Clear</div>
<svg class="b" style="left:1698px;top:123px" width="6" height="4" viewBox="0 0 6 4"><path d="M0 0h5l-2.5 3z" fill="#444"/></svg>
<svg class="b" style="left:1743px;top:72px" width="32" height="28" viewBox="0 0 32 28"><path d="M1.5 13l4-11.5h1.5L11 13M3 9h6" fill="none" stroke="#b8b8b8" stroke-width="2"/><path d="M1.5 15.5H10L2 25.5h8.5" fill="none" stroke="#b8b8b8" stroke-width="2"/><path d="M13 8h17l-6.5 7v9l-4-2v-7z" fill="#b0b0b0"/></svg>
<div id="t54" class="t" style="left:1741.49px;top:106.94px;font-size:12.00px;line-height:12.00px;color:#a6a6a6;font-weight:normal;transform:scaleX(1.0278);transform-origin:0 0;">Sort &amp;</div>
<div id="t55" class="t" style="left:1741.88px;top:122.54px;font-size:12.00px;line-height:12.00px;color:#a6a6a6;font-weight:normal;transform:scaleX(0.9718);transform-origin:0 0;">Filter</div>
<svg class="b" style="left:1771px;top:127px" width="6" height="4" viewBox="0 0 6 4"><path d="M0 0h5l-2.5 3z" fill="#c8c8c8"/></svg>
<svg class="b" style="left:1787px;top:71px" width="29" height="29" viewBox="0 0 29 29"><circle cx="17.5" cy="10.5" r="8.3" fill="#fff" stroke="#2e75b6" stroke-width="2.4"/><path d="M11.5 16.5l-9 9" stroke="#2e75b6" stroke-width="3.2" stroke-linecap="round"/></svg>
<div id="t56" class="t" style="left:1783.40px;top:106.84px;font-size:12.00px;line-height:12.00px;color:#262626;font-weight:normal;transform:scaleX(1.0513);transform-origin:0 0;">Find &amp;</div>
<div id="t57" class="t" style="left:1781.73px;top:122.54px;font-size:12.00px;line-height:12.00px;color:#262626;font-weight:normal;transform:scaleX(0.9338);transform-origin:0 0;">Select</div>
<svg class="b" style="left:1815.7px;top:127px" width="6" height="4" viewBox="0 0 6 4"><path d="M0 0h5l-2.5 3z" fill="#444"/></svg>
<svg class="b" style="left:1900px;top:145px" width="13" height="8" viewBox="0 0 13 8"><path d="M1 7l5.5-5.5L12 7" fill="none" stroke="#555" stroke-width="1.1"/></svg>
<div class="b" style="left:0px;top:157px;width:1920px;height:67px;background:#e6e6e6"></div>
<div class="b" style="left:5px;top:167px;width:102px;height:26px;background:#fff;border:1px solid #c6c6c6;box-sizing:border-box"></div>
<div id="t58" class="t" style="left:11.51px;top:174.00px;font-size:13.00px;line-height:13.00px;color:#333;font-weight:normal;transform:scaleX(0.9768);transform-origin:0 0;">F1302</div>
<svg class="b" style="left:92px;top:176px" width="8" height="5" viewBox="0 0 8 5"><path d="M0 0h7l-3.5 4z" fill="#666"/></svg>
<div class="b" style="left:121px;top:175px;width:2px;height:2px;background:#9a9a9a"></div>
<div class="b" style="left:121px;top:180px;width:2px;height:2px;background:#9a9a9a"></div>
<div class="b" style="left:121px;top:185px;width:2px;height:2px;background:#9a9a9a"></div>
<div class="b" style="left:137px;top:167px;width:110px;height:26px;background:#fff;border:1px solid #c6c6c6;box-sizing:border-box"></div>
<svg class="b" style="left:150px;top:175px" width="11" height="11" viewBox="0 0 11 11"><path d="M1 1l9 9M10 1l-9 9" stroke="#555" stroke-width="1.3"/></svg>
<svg class="b" style="left:185px;top:174px" width="14" height="12" viewBox="0 0 14 12"><path d="M1.5 6.5l4 4 7-9" fill="none" stroke="#555" stroke-width="2"/></svg>
<div id="t59" class="t" style="left:222.00px;top:173.15px;font-size:14.00px;line-height:14.00px;color:#555;font-weight:normal;font-family:"Liberation Serif", serif;transform:scaleX(1.1020);transform-origin:0 0;"><i>f</i><span style="font-size:9px"><i>x</i></span></div>
<div class="b" style="left:250px;top:167px;width:1665px;height:46px;background:#fff;border:1px solid #c6c6c6;box-sizing:border-box"></div>
<div id="t60" class="t" style="left:261.90px;top:174.00px;font-size:13.00px;line-height:13.00px;color:#222;font-weight:normal;transform:scaleX(0.9898);transform-origin:0 0;">2047</div>
<svg class="b" style="left:1902px;top:176px" width="9" height="6" viewBox="0 0 9 6"><path d="M1 5l3.5-3.5L8 5" fill="none" stroke="#666" stroke-width="1.6"/></svg>
<div class="b" style="left:0px;top:224px;width:1902px;height:18px;background:#e6e6e6"></div>
<div class="b" style="left:0px;top:242px;width:32px;height:748px;background:#e6e6e6"></div>
<div class="b" style="left:33px;top:243px;width:1865px;height:747px;background:#fff"></div>
<div class="b" style="left:1097px;top:224px;width:188px;height:18px;background:#d2d2d2"></div>
<div class="b" style="left:1097px;top:241px;width:188px;height:2px;background:#217346"></div>
<div class="b" style="left:0px;top:803px;width:32px;height:19px;background:#d2d2d2"></div>
<div class="b" style="left:30px;top:802px;width:2px;height:21px;background:#217346"></div>
<div class="b" style="left:33px;top:262px;width:1865px;height:1px;background:#d6d6d6"></div>
<div class="b" style="left:0px;top:262px;width:32px;height:1px;background:#a8a8a8"></div>
<div class="b" style="left:33px;top:282px;width:1865px;height:1px;background:#d6d6d6"></div>
<div class="b" style="left:0px;top:282px;width:32px;height:1px;background:#a8a8a8"></div>
<div class="b" style="left:33px;top:302px;width:1865px;height:1px;background:#d6d6d6"></div>
<div class="b" style="left:0px;top:302px;width:32px;height:1px;background:#a8a8a8"></div>
<div class="b" style="left:33px;top:322px;width:1865px;height:1px;background:#d6d6d6"></div>
<div class="b" style="left:0px;top:322px;width:32px;height:1px;background:#a8a8a8"></div>
<div class="b" style="left:33px;top:342px;width:1865px;height:1px;background:#d6d6d6"></div>
<div class="b" style="left:0px;top:342px;width:32px;height:1px;background:#a8a8a8"></div>
<div class="b" style="left:33px;top:362px;width:1865px;height:1px;background:#d6d6d6"></div>
<div class="b" style="left:0px;top:362px;width:32px;height:1px;background:#a8a8a8"></div>
<div class="b" style="left:33px;top:382px;width:1865px;height:1px;background:#d6d6d6"></div>
<div class="b" style="left:0px;top:382px;width:32px;height:1px;background:#a8a8a8"></div>
<div class="b" style="left:33px;top:402px;width:1865px;height:1px;background:#d6d6d6"></div>
<div class="b" style="left:0px;top:402px;width:32px;height:1px;background:#a8a8a8"></div>
<div class="b" style="left:33px;top:422px;width:1865px;height:1px;background:#d6d6d6"></div>
<div class="b" style="left:0px;top:422px;width:32px;height:1px;background:#a8a8a8"></div>
<div class="b" style="left:33px;top:442px;width:1865px;height:1px;background:#d6d6d6"></div>
<div class="b" style="left:0px;top:442px;width:32px;height:1px;background:#a8a8a8"></div>
<div class="b" style="left:33px;top:462px;width:1865px;height:1px;background:#d6d6d6"></div>
<div class="b" style="left:0px;top:462px;width:32px;height:1px;background:#a8a8a8"></div>
<div class="b" style="left:33px;top:482px;width:1865px;height:1px;background:#d6d6d6"></div>
<div class="b" style="left:0px;top:482px;width:32px;height:1px;background:#a8a8a8"></div>
<div class="b" style="left:33px;top:502px;width:1865px;height:1px;background:#d6d6d6"></div>
<div class="b" style="left:0px;top:502px;width:32px;height:1px;background:#a8a8a8"></div>
<div class="b" style="left:33px;top:522px;width:1865px;height:1px;background:#d6d6d6"></div>
<div class="b" style="left:0px;top:522px;width:32px;height:1px;background:#a8a8a8"></div>
<div class="b" style="left:33px;top:542px;width:1865px;height:1px;background:#d6d6d6"></div>
<div class="b" style="left:0px;top:542px;width:32px;height:1px;background:#a8a8a8"></div>
<div class="b" style="left:33px;top:562px;width:1865px;height:1px;background:#d6d6d6"></div>
<div class="b" style="left:0px;top:562px;width:32px;height:1px;background:#a8a8a8"></div>
<div class="b" style="left:33px;top:582px;width:1865px;height:1px;background:#d6d6d6"></div>
<div class="b" style="left:0px;top:582px;width:32px;height:1px;background:#a8a8a8"></div>
<div class="b" style="left:33px;top:602px;width:1865px;height:1px;background:#d6d6d6"></div>
<div class="b" style="left:0px;top:602px;width:32px;height:1px;background:#a8a8a8"></div>
<div class="b" style="left:33px;top:622px;width:1865px;height:1px;background:#d6d6d6"></div>
<div class="b" style="left:0px;top:622px;width:32px;height:1px;background:#a8a8a8"></div>
<div class="b" style="left:33px;top:642px;width:1865px;height:1px;background:#d6d6d6"></div>
<div class="b" style="left:0px;top:642px;width:32px;height:1px;background:#a8a8a8"></div>
<div class="b" style="left:33px;top:662px;width:1865px;height:1px;background:#d6d6d6"></div>
<div class="b" style="left:0px;top:662px;width:32px;height:1px;background:#a8a8a8"></div>
<div class="b" style="left:33px;top:682px;width:1865px;height:1px;background:#d6d6d6"></div>
<div class="b" style="left:0px;top:682px;width:32px;height:1px;background:#a8a8a8"></div>
<div class="b" style="left:33px;top:702px;width:1865px;height:1px;background:#d6d6d6"></div>
<div class="b" style="left:0px;top:702px;width:32px;height:1px;background:#a8a8a8"></div>
<div class="b" style="left:33px;top:722px;width:1865px;height:1px;background:#d6d6d6"></div>
<div class="b" style="left:0px;top:722px;width:32px;height:1px;background:#a8a8a8"></div>
<div class="b" style="left:33px;top:742px;width:1865px;height:1px;background:#d6d6d6"></div>
<div class="b" style="left:0px;top:742px;width:32px;height:1px;background:#a8a8a8"></div>
<div class="b" style="left:33px;top:762px;width:1865px;height:1px;background:#d6d6d6"></div>
<div class="b" style="left:0px;top:762px;width:32px;height:1px;background:#a8a8a8"></div>
<div class="b" style="left:33px;top:782px;width:1865px;height:1px;background:#d6d6d6"></div>
<div class="b" style="left:0px;top:782px;width:32px;height:1px;background:#a8a8a8"></div>
<div class="b" style="left:33px;top:802px;width:1865px;height:1px;background:#d6d6d6"></div>
<div class="b" style="left:0px;top:802px;width:32px;height:1px;background:#a8a8a8"></div>
<div class="b" style="left:33px;top:822px;width:1865px;height:1px;background:#d6d6d6"></div>
<div class="b" style="left:0px;top:822px;width:32px;height:1px;background:#a8a8a8"></div>
<div class="b" style="left:33px;top:842px;width:1865px;height:1px;background:#d6d6d6"></div>
<div class="b" style="left:0px;top:842px;width:32px;height:1px;background:#a8a8a8"></div>
<div class="b" style="left:33px;top:862px;width:1865px;height:1px;background:#d6d6d6"></div>
<div class="b" style="left:0px;top:862px;width:32px;height:1px;background:#a8a8a8"></div>
<div class="b" style="left:33px;top:882px;width:1865px;height:1px;background:#d6d6d6"></div>
<div class="b" style="left:0px;top:882px;width:32px;height:1px;background:#a8a8a8"></div>
<div class="b" style="left:33px;top:902px;width:1865px;height:1px;background:#d6d6d6"></div>
<div class="b" style="left:0px;top:902px;width:32px;height:1px;background:#a8a8a8"></div>
<div class="b" style="left:33px;top:922px;width:1865px;height:1px;background:#d6d6d6"></div>
<div class="b" style="left:0px;top:922px;width:32px;height:1px;background:#a8a8a8"></div>
<div class="b" style="left:33px;top:942px;width:1865px;height:1px;background:#d6d6d6"></div>
<div class="b" style="left:0px;top:942px;width:32px;height:1px;background:#a8a8a8"></div>
<div class="b" style="left:33px;top:962px;width:1865px;height:1px;background:#d6d6d6"></div>
<div class="b" style="left:0px;top:962px;width:32px;height:1px;background:#a8a8a8"></div>
<div class="b" style="left:33px;top:982px;width:1865px;height:1px;background:#d6d6d6"></div>
<div class="b" style="left:0px;top:982px;width:32px;height:1px;background:#a8a8a8"></div>
<div class="b" style="left:96px;top:243px;width:1px;height:747px;background:#d6d6d6"></div>
<div class="b" style="left:96px;top:224px;width:1px;height:18px;background:#a8a8a8"></div>
<div class="b" style="left:306px;top:243px;width:1px;height:747px;background:#d6d6d6"></div>
<div class="b" style="left:306px;top:224px;width:1px;height:18px;background:#a8a8a8"></div>
<div class="b" style="left:636px;top:243px;width:1px;height:747px;background:#d6d6d6"></div>
<div class="b" style="left:636px;top:224px;width:1px;height:18px;background:#a8a8a8"></div>
<div class="b" style="left:692px;top:243px;width:1px;height:747px;background:#d6d6d6"></div>
<div class="b" style="left:692px;top:224px;width:1px;height:18px;background:#a8a8a8"></div>
<div class="b" style="left:1097px;top:243px;width:1px;height:747px;background:#d6d6d6"></div>
<div class="b" style="left:1097px;top:224px;width:1px;height:18px;background:#a8a8a8"></div>
<div class="b" style="left:1284px;top:243px;width:1px;height:747px;background:#d6d6d6"></div>
<div class="b" style="left:1284px;top:224px;width:1px;height:18px;background:#a8a8a8"></div>
<div class="b" style="left:1471px;top:243px;width:1px;height:747px;background:#d6d6d6"></div>
<div class="b" style="left:1471px;top:224px;width:1px;height:18px;background:#a8a8a8"></div>
<div class="b" style="left:1663px;top:243px;width:1px;height:747px;background:#d6d6d6"></div>
<div class="b" style="left:1663px;top:224px;width:1px;height:18px;background:#a8a8a8"></div>
<div class="b" style="left:1733px;top:243px;width:1px;height:747px;background:#d6d6d6"></div>
<div class="b" style="left:1733px;top:224px;width:1px;height:18px;background:#a8a8a8"></div>
<div class="b" style="left:1797px;top:243px;width:1px;height:747px;background:#d6d6d6"></div>
<div class="b" style="left:1797px;top:224px;width:1px;height:18px;background:#a8a8a8"></div>
<div class="b" style="left:1861px;top:243px;width:1px;height:747px;background:#d6d6d6"></div>
<div class="b" style="left:1861px;top:224px;width:1px;height:18px;background:#a8a8a8"></div>
<div class="b" style="left:0px;top:242px;width:1898px;height:1px;background:#9b9b9b"></div>
<div class="b" style="left:32px;top:224px;width:1px;height:766px;background:#9b9b9b"></div>
<div class="b" style="left:1898px;top:242px;width:1px;height:748px;background:#9b9b9b"></div>
<svg class="b" style="left:16px;top:226px" width="14" height="14" viewBox="0 0 14 14"><path d="M13 1v12H1z" fill="#b4b4b4"/></svg>
<div class="t" style="left:64.0px;top:227.43455px;width:40px;margin-left:-20px;text-align:center;font-size:11.3px;line-height:11.3px;color:#333">A</div>
<div class="t" style="left:201.0px;top:227.43455px;width:40px;margin-left:-20px;text-align:center;font-size:11.3px;line-height:11.3px;color:#333">B</div>
<div class="t" style="left:471.0px;top:227.43455px;width:40px;margin-left:-20px;text-align:center;font-size:11.3px;line-height:11.3px;color:#333">C</div>
<div class="t" style="left:664.0px;top:227.43455px;width:40px;margin-left:-20px;text-align:center;font-size:11.3px;line-height:11.3px;color:#333">D</div>
<div class="t" style="left:894.5px;top:227.43455px;width:40px;margin-left:-20px;text-align:center;font-size:11.3px;line-height:11.3px;color:#333">E</div>
<div class="t" style="left:1190.5px;top:227.43455px;width:40px;margin-left:-20px;text-align:center;font-size:11.3px;line-height:11.3px;color:#217346">F</div>
<div class="t" style="left:1377.5px;top:227.43455px;width:40px;margin-left:-20px;text-align:center;font-size:11.3px;line-height:11.3px;color:#333">G</div>
<div class="t" style="left:1567.0px;top:227.43455px;width:40px;margin-left:-20px;text-align:center;font-size:11.3px;line-height:11.3px;color:#333">H</div>
<div class="t" style="left:1698.0px;top:227.43455px;width:40px;margin-left:-20px;text-align:center;font-size:11.3px;line-height:11.3px;color:#333">I</div>
<div class="t" style="left:1765.0px;top:227.43455px;width:40px;margin-left:-20px;text-align:center;font-size:11.3px;line-height:11.3px;color:#333">J</div>
<div class="t" style="left:1829.0px;top:227.43455px;width:40px;margin-left:-20px;text-align:center;font-size:11.3px;line-height:11.3px;color:#333">K</div>
<div class="t" style="left:1892px;top:227.43455px;width:40px;margin-left:-20px;text-align:center;font-size:11.3px;line-height:11.3px;color:#333">L</div>
<div class="b" style="left:0px;top:243px;width:32px;height:747px;overflow:hidden">
<div id="t61" class="t" style="left:2.78px;top:5.42px;font-size:12.50px;line-height:12.50px;color:#222;font-weight:normal;transform:scaleX(0.9734);transform-origin:0 0;">1274</div>
<div id="t62" class="t" style="left:2.92px;top:25.42px;font-size:12.50px;line-height:12.50px;color:#222;font-weight:normal;transform:scaleX(0.9734);transform-origin:0 0;">1275</div>
<div id="t63" class="t" style="left:2.92px;top:45.42px;font-size:12.50px;line-height:12.50px;color:#222;font-weight:normal;transform:scaleX(0.9734);transform-origin:0 0;">1276</div>
<div id="t64" class="t" style="left:3.02px;top:65.42px;font-size:12.50px;line-height:12.50px;color:#222;font-weight:normal;transform:scaleX(0.9734);transform-origin:0 0;">1277</div>
<div id="t65" class="t" style="left:2.92px;top:85.42px;font-size:12.50px;line-height:12.50px;color:#222;font-weight:normal;transform:scaleX(0.9734);transform-origin:0 0;">1278</div>
<div id="t66" class="t" style="left:2.97px;top:105.42px;font-size:12.50px;line-height:12.50px;color:#222;font-weight:normal;transform:scaleX(0.9734);transform-origin:0 0;">1279</div>
<div id="t67" class="t" style="left:2.87px;top:125.42px;font-size:12.50px;line-height:12.50px;color:#222;font-weight:normal;transform:scaleX(0.9734);transform-origin:0 0;">1280</div>
<div id="t68" class="t" style="left:3.02px;top:145.42px;font-size:12.50px;line-height:12.50px;color:#222;font-weight:normal;transform:scaleX(0.9734);transform-origin:0 0;">1281</div>
<div id="t69" class="t" style="left:3.02px;top:165.42px;font-size:12.50px;line-height:12.50px;color:#222;font-weight:normal;transform:scaleX(0.9734);transform-origin:0 0;">1282</div>
<div id="t70" class="t" style="left:2.92px;top:185.42px;font-size:12.50px;line-height:12.50px;color:#222;font-weight:normal;transform:scaleX(0.9734);transform-origin:0 0;">1283</div>
<div id="t71" class="t" style="left:2.78px;top:205.42px;font-size:12.50px;line-height:12.50px;color:#222;font-weight:normal;transform:scaleX(0.9734);transform-origin:0 0;">1284</div>
<div id="t72" class="t" style="left:2.92px;top:225.42px;font-size:12.50px;line-height:12.50px;color:#222;font-weight:normal;transform:scaleX(0.9734);transform-origin:0 0;">1285</div>
<div id="t73" class="t" style="left:2.92px;top:245.42px;font-size:12.50px;line-height:12.50px;color:#222;font-weight:normal;transform:scaleX(0.9734);transform-origin:0 0;">1286</div>
<div id="t74" class="t" style="left:3.02px;top:265.42px;font-size:12.50px;line-height:12.50px;color:#222;font-weight:normal;transform:scaleX(0.9734);transform-origin:0 0;">1287</div>
<div id="t75" class="t" style="left:2.92px;top:285.42px;font-size:12.50px;line-height:12.50px;color:#222;font-weight:normal;transform:scaleX(0.9734);transform-origin:0 0;">1288</div>
<div id="t76" class="t" style="left:2.97px;top:305.42px;font-size:12.50px;line-height:12.50px;color:#222;font-weight:normal;transform:scaleX(0.9734);transform-origin:0 0;">1289</div>
<div id="t77" class="t" style="left:2.87px;top:325.42px;font-size:12.50px;line-height:12.50px;color:#222;font-weight:normal;transform:scaleX(0.9734);transform-origin:0 0;">1290</div>
<div id="t78" class="t" style="left:3.02px;top:345.42px;font-size:12.50px;line-height:12.50px;color:#222;font-weight:normal;transform:scaleX(0.9734);transform-origin:0 0;">1291</div>
<div id="t79" class="t" style="left:3.02px;top:365.42px;font-size:12.50px;line-height:12.50px;color:#222;font-weight:normal;transform:scaleX(0.9734);transform-origin:0 0;">1292</div>
<div id="t80" class="t" style="left:2.92px;top:385.42px;font-size:12.50px;line-height:12.50px;color:#222;font-weight:normal;transform:scaleX(0.9734);transform-origin:0 0;">1293</div>
<div id="t81" class="t" style="left:2.78px;top:405.42px;font-size:12.50px;line-height:12.50px;color:#222;font-weight:normal;transform:scaleX(0.9734);transform-origin:0 0;">1294</div>
<div id="t82" class="t" style="left:2.92px;top:425.42px;font-size:12.50px;line-height:12.50px;color:#222;font-weight:normal;transform:scaleX(0.9734);transform-origin:0 0;">1295</div>
<div id="t83" class="t" style="left:2.92px;top:445.42px;font-size:12.50px;line-height:12.50px;color:#222;font-weight:normal;transform:scaleX(0.9734);transform-origin:0 0;">1296</div>
<div id="t84" class="t" style="left:3.02px;top:465.42px;font-size:12.50px;line-height:12.50px;color:#222;font-weight:normal;transform:scaleX(0.9734);transform-origin:0 0;">1297</div>
<div id="t85" class="t" style="left:2.92px;top:485.42px;font-size:12.50px;line-height:12.50px;color:#222;font-weight:normal;transform:scaleX(0.9734);transform-origin:0 0;">1298</div>
<div id="t86" class="t" style="left:2.97px;top:505.42px;font-size:12.50px;line-height:12.50px;color:#222;font-weight:normal;transform:scaleX(0.9734);transform-origin:0 0;">1299</div>
<div id="t87" class="t" style="left:2.87px;top:525.42px;font-size:12.50px;line-height:12.50px;color:#222;font-weight:normal;transform:scaleX(0.9734);transform-origin:0 0;">1300</div>
<div id="t88" class="t" style="left:3.02px;top:545.42px;font-size:12.50px;line-height:12.50px;color:#222;font-weight:normal;transform:scaleX(0.9734);transform-origin:0 0;">1301</div>
<div id="t89" class="t" style="left:3.02px;top:565.42px;font-size:12.50px;line-height:12.50px;color:#217346;font-weight:normal;transform:scaleX(0.9734);transform-origin:0 0;">1302</div>
<div id="t90" class="t" style="left:2.92px;top:585.42px;font-size:12.50px;line-height:12.50px;color:#222;font-weight:normal;transform:scaleX(0.9734);transform-origin:0 0;">1303</div>
<div id="t91" class="t" style="left:2.78px;top:605.42px;font-size:12.50px;line-height:12.50px;color:#222;font-weight:normal;transform:scaleX(0.9734);transform-origin:0 0;">1304</div>
<div id="t92" class="t" style="left:2.92px;top:625.42px;font-size:12.50px;line-height:12.50px;color:#222;font-weight:normal;transform:scaleX(0.9734);transform-origin:0 0;">1305</div>
<div id="t93" class="t" style="left:2.92px;top:645.42px;font-size:12.50px;line-height:12.50px;color:#222;font-weight:normal;transform:scaleX(0.9734);transform-origin:0 0;">1306</div>
<div id="t94" class="t" style="left:3.02px;top:665.42px;font-size:12.50px;line-height:12.50px;color:#222;font-weight:normal;transform:scaleX(0.9734);transform-origin:0 0;">1307</div>
<div id="t95" class="t" style="left:2.92px;top:685.42px;font-size:12.50px;line-height:12.50px;color:#222;font-weight:normal;transform:scaleX(0.9734);transform-origin:0 0;">1308</div>
<div id="t96" class="t" style="left:2.97px;top:705.42px;font-size:12.50px;line-height:12.50px;color:#222;font-weight:normal;transform:scaleX(0.9734);transform-origin:0 0;">1309</div>
<div id="t97" class="t" style="left:2.87px;top:725.42px;font-size:12.50px;line-height:12.50px;color:#222;font-weight:normal;transform:scaleX(0.9734);transform-origin:0 0;">1310</div>
<div id="t98" class="t" style="left:3.92px;top:745.42px;font-size:12.50px;line-height:12.50px;color:#222;font-weight:normal;transform:scaleX(0.9734);transform-origin:0 0;">1311</div>
</div>
<div id="t99" class="t" style="left:308.56px;top:248.42px;font-size:12.50px;line-height:12.50px;color:#000;font-weight:normal;transform:scaleX(1.1436);transform-origin:0 0;">Deposito</div>
<div id="t100" class="t" style="left:1176.78px;top:248.42px;font-size:12.50px;line-height:12.50px;color:#000;font-weight:normal;transform:scaleX(1.0277);transform-origin:0 0;">2024</div>
<div id="t101" class="t" style="left:1399.48px;top:248.42px;font-size:12.50px;line-height:12.50px;color:#000;font-weight:normal;transform:scaleX(1.0324);transform-origin:0 0;">70.000.000</div>
<div id="t102" class="t" style="left:79.79px;top:288.42px;font-size:12.50px;line-height:12.50px;color:#000;font-weight:normal;transform:scaleX(1.0267);transform-origin:0 0;">84</div>
<div id="t103" class="t" style="left:98.41px;top:288.42px;font-size:12.50px;line-height:12.50px;color:#000;font-weight:normal;transform:scaleX(1.0882);transform-origin:0 0;">Bharwani Tarmin Raskam</div>
<div id="t104" class="t" style="left:308.61px;top:288.42px;font-size:12.50px;line-height:12.50px;color:#000;font-weight:normal;transform:scaleX(1.0905);transform-origin:0 0;">Logam Mulia</div>
<div id="t105" class="t" style="left:1176.68px;top:288.42px;font-size:12.50px;line-height:12.50px;color:#000;font-weight:normal;transform:scaleX(1.0277);transform-origin:0 0;">1996</div>
<div id="t106" class="t" style="left:1392.02px;top:288.42px;font-size:12.50px;line-height:12.50px;color:#000;font-weight:normal;transform:scaleX(1.0365);transform-origin:0 0;">132.500.000</div>
<div id="t107" class="t" style="left:98.77px;top:308.42px;font-size:12.50px;line-height:12.50px;color:#000;font-weight:normal;transform:scaleX(0.9798);transform-origin:0 0;">(SUSILO)</div>
<div id="t108" class="t" style="left:309.43px;top:308.42px;font-size:12.50px;line-height:12.50px;color:#000;font-weight:normal;transform:scaleX(1.0948);transform-origin:0 0;">Tanah dan/atau Bangunan Untuk Tempat Tinggal</div>
<div id="t109" class="t" style="left:1176.73px;top:308.42px;font-size:12.50px;line-height:12.50px;color:#000;font-weight:normal;transform:scaleX(1.0277);transform-origin:0 0;">1991</div>
<div id="t110" class="t" style="left:1399.48px;top:308.42px;font-size:12.50px;line-height:12.50px;color:#000;font-weight:normal;transform:scaleX(1.0324);transform-origin:0 0;">75.000.000</div>
<div id="t111" class="t" style="left:309.43px;top:328.42px;font-size:12.50px;line-height:12.50px;color:#000;font-weight:normal;transform:scaleX(1.0725);transform-origin:0 0;">Tanah dan/atau Bangunan Untuk Usaha</div>
<div id="t112" class="t" style="left:1176.73px;top:328.42px;font-size:12.50px;line-height:12.50px;color:#000;font-weight:normal;transform:scaleX(1.0277);transform-origin:0 0;">1992</div>
<div id="t113" class="t" style="left:1381.68px;top:328.42px;font-size:12.50px;line-height:12.50px;color:#000;font-weight:normal;transform:scaleX(1.0306);transform-origin:0 0;">7.079.500.000</div>
<div id="t114" class="t" style="left:309.43px;top:348.42px;font-size:12.50px;line-height:12.50px;color:#000;font-weight:normal;transform:scaleX(1.0948);transform-origin:0 0;">Tanah dan/atau Bangunan Untuk Tempat Tinggal</div>
<div id="t115" class="t" style="left:1176.68px;top:348.42px;font-size:12.50px;line-height:12.50px;color:#000;font-weight:normal;transform:scaleX(1.0277);transform-origin:0 0;">1996</div>
<div id="t116" class="t" style="left:1392.30px;top:348.42px;font-size:12.50px;line-height:12.50px;color:#000;font-weight:normal;transform:scaleX(1.0324);transform-origin:0 0;">461.600.000</div>
<div id="t117" class="t" style="left:309.43px;top:368.42px;font-size:12.50px;line-height:12.50px;color:#000;font-weight:normal;transform:scaleX(1.0948);transform-origin:0 0;">Tanah dan/atau Bangunan Untuk Tempat Tinggal</div>
<div id="t118" class="t" style="left:1176.83px;top:368.42px;font-size:12.50px;line-height:12.50px;color:#000;font-weight:normal;transform:scaleX(1.0277);transform-origin:0 0;">2000</div>
<div id="t119" class="t" style="left:1381.59px;top:368.42px;font-size:12.50px;line-height:12.50px;color:#000;font-weight:normal;transform:scaleX(1.0324);transform-origin:0 0;">1.310.810.546</div>
<div id="t120" class="t" style="left:308.46px;top:388.42px;font-size:12.50px;line-height:12.50px;color:#000;font-weight:normal;transform:scaleX(1.2409);transform-origin:0 0;">Mobil</div>
<div id="t121" class="t" style="left:1176.89px;top:388.42px;font-size:12.50px;line-height:12.50px;color:#000;font-weight:normal;transform:scaleX(1.0277);transform-origin:0 0;">2009</div>
<div id="t122" class="t" style="left:1392.30px;top:388.42px;font-size:12.50px;line-height:12.50px;color:#000;font-weight:normal;transform:scaleX(1.0324);transform-origin:0 0;">335.000.000</div>
<div id="t123" class="t" style="left:308.56px;top:408.42px;font-size:12.50px;line-height:12.50px;color:#000;font-weight:normal;transform:scaleX(1.1436);transform-origin:0 0;">Deposito</div>
<div id="t124" class="t" style="left:1176.86px;top:408.42px;font-size:12.50px;line-height:12.50px;color:#000;font-weight:normal;transform:scaleX(1.0277);transform-origin:0 0;">2023</div>
<div id="t125" class="t" style="left:1374.84px;top:408.42px;font-size:12.50px;line-height:12.50px;color:#000;font-weight:normal;transform:scaleX(1.0269);transform-origin:0 0;">38.746.000.000</div>
<div id="t126" class="t" style="left:309.43px;top:428.42px;font-size:12.50px;line-height:12.50px;color:#000;font-weight:normal;transform:scaleX(1.0948);transform-origin:0 0;">Tanah dan/atau Bangunan Untuk Tempat Tinggal</div>
<div id="t127" class="t" style="left:1177.39px;top:428.42px;font-size:12.50px;line-height:12.50px;color:#000;font-weight:normal;transform:scaleX(1.0277);transform-origin:0 0;">2011</div>
<div id="t128" class="t" style="left:1381.54px;top:428.42px;font-size:12.50px;line-height:12.50px;color:#000;font-weight:normal;transform:scaleX(1.0324);transform-origin:0 0;">1.686.600.000</div>
<div id="t129" class="t" style="left:309.16px;top:448.42px;font-size:12.50px;line-height:12.50px;color:#000;font-weight:normal;transform:scaleX(1.0724);transform-origin:0 0;">anah dan/atau Bangunan Untuk Usaha</div>
<div id="t130" class="t" style="left:1176.86px;top:448.42px;font-size:12.50px;line-height:12.50px;color:#000;font-weight:normal;transform:scaleX(1.0277);transform-origin:0 0;">2015</div>
<div id="t131" class="t" style="left:1381.70px;top:448.42px;font-size:12.50px;line-height:12.50px;color:#000;font-weight:normal;transform:scaleX(1.0324);transform-origin:0 0;">2.940.909.091</div>
<div id="t132" class="t" style="left:308.56px;top:468.42px;font-size:12.50px;line-height:12.50px;color:#000;font-weight:normal;transform:scaleX(1.1436);transform-origin:0 0;">Deposito</div>
<div id="t133" class="t" style="left:1176.91px;top:468.42px;font-size:12.50px;line-height:12.50px;color:#000;font-weight:normal;transform:scaleX(1.0277);transform-origin:0 0;">2022</div>
<div id="t134" class="t" style="left:1367.21px;top:468.42px;font-size:12.50px;line-height:12.50px;color:#000;font-weight:normal;transform:scaleX(1.0431);transform-origin:0 0;">112.507.751.973</div>
<div id="t135" class="t" style="left:309.43px;top:488.42px;font-size:12.50px;line-height:12.50px;color:#000;font-weight:normal;transform:scaleX(1.0948);transform-origin:0 0;">Tanah dan/atau Bangunan Untuk Tempat Tinggal</div>
<div id="t136" class="t" style="left:1176.86px;top:488.42px;font-size:12.50px;line-height:12.50px;color:#000;font-weight:normal;transform:scaleX(1.0277);transform-origin:0 0;">2016</div>
<div id="t137" class="t" style="left:1381.54px;top:488.42px;font-size:12.50px;line-height:12.50px;color:#000;font-weight:normal;transform:scaleX(1.0324);transform-origin:0 0;">1.925.000.000</div>
<div id="t138" class="t" style="left:309.43px;top:508.42px;font-size:12.50px;line-height:12.50px;color:#000;font-weight:normal;transform:scaleX(1.0948);transform-origin:0 0;">Tanah dan/atau Bangunan Untuk Tempat Tinggal</div>
<div id="t139" class="t" style="left:1176.86px;top:508.42px;font-size:12.50px;line-height:12.50px;color:#000;font-weight:normal;transform:scaleX(1.0277);transform-origin:0 0;">2016</div>
<div id="t140" class="t" style="left:1381.54px;top:508.42px;font-size:12.50px;line-height:12.50px;color:#000;font-weight:normal;transform:scaleX(1.0324);transform-origin:0 0;">5.000.000.000</div>
<div id="t141" class="t" style="left:309.16px;top:528.42px;font-size:12.50px;line-height:12.50px;color:#000;font-weight:normal;transform:scaleX(1.0724);transform-origin:0 0;">anah dan/atau Bangunan Untuk Usaha</div>
<div id="t142" class="t" style="left:1176.83px;top:528.42px;font-size:12.50px;line-height:12.50px;color:#000;font-weight:normal;transform:scaleX(1.0277);transform-origin:0 0;">2020</div>
<div id="t143" class="t" style="left:1381.54px;top:528.42px;font-size:12.50px;line-height:12.50px;color:#000;font-weight:normal;transform:scaleX(1.0324);transform-origin:0 0;">2.299.254.000</div>
<div id="t144" class="t" style="left:79.78px;top:568.42px;font-size:12.50px;line-height:12.50px;color:#000;font-weight:normal;transform:scaleX(1.0386);transform-origin:0 0;">85</div>
<div id="t145" class="t" style="left:98.90px;top:568.42px;font-size:12.50px;line-height:12.50px;color:#000;font-weight:normal;transform:scaleX(1.0934);transform-origin:0 0;">Suyanto</div>
<div id="t146" class="t" style="left:308.63px;top:568.42px;font-size:12.50px;line-height:12.50px;color:#000;font-weight:normal;transform:scaleX(0.9704);transform-origin:0 0;">PERSEDIAAN USAHA</div>
<div id="t147" class="t" style="left:309.34px;top:588.42px;font-size:12.50px;line-height:12.50px;color:#000;font-weight:normal;transform:scaleX(1.0387);transform-origin:0 0;">TABUNGAN</div>
<div id="t148" class="t" style="left:308.56px;top:608.42px;font-size:12.50px;line-height:12.50px;color:#000;font-weight:normal;transform:scaleX(1.0444);transform-origin:0 0;">RUMAH</div>
<div id="t149" class="t" style="left:308.55px;top:628.42px;font-size:12.50px;line-height:12.50px;color:#000;font-weight:normal;transform:scaleX(1.0481);transform-origin:0 0;">MOBIL</div>
<div id="t150" class="t" style="left:308.58px;top:648.42px;font-size:12.50px;line-height:12.50px;color:#000;font-weight:normal;transform:scaleX(1.0242);transform-origin:0 0;">MOTOR</div>
<div id="t151" class="t" style="left:309.34px;top:668.42px;font-size:12.50px;line-height:12.50px;color:#000;font-weight:normal;transform:scaleX(1.0377);transform-origin:0 0;">TANAH DAN/ATAU BANGUNAN TEMPAT USAHA</div>
<div id="t152" class="t" style="left:309.34px;top:688.42px;font-size:12.50px;line-height:12.50px;color:#000;font-weight:normal;transform:scaleX(1.0377);transform-origin:0 0;">TANAH DAN/ATAU BANGUNAN TEMPAT USAHA</div>
<div id="t153" class="t" style="left:309.03px;top:708.42px;font-size:12.50px;line-height:12.50px;color:#000;font-weight:normal;transform:scaleX(1.0445);transform-origin:0 0;">SAHAM</div>
<div id="t154" class="t" style="left:309.08px;top:728.42px;font-size:12.50px;line-height:12.50px;color:#000;font-weight:normal;transform:scaleX(0.9545);transform-origin:0 0;">SETARA KAS</div>
<div id="t155" class="t" style="left:308.58px;top:748.42px;font-size:12.50px;line-height:12.50px;color:#000;font-weight:normal;transform:scaleX(1.0242);transform-origin:0 0;">MOTOR</div>
<div id="t156" class="t" style="left:308.58px;top:768.42px;font-size:12.50px;line-height:12.50px;color:#000;font-weight:normal;transform:scaleX(1.0242);transform-origin:0 0;">MOTOR</div>
<div id="t157" class="t" style="left:1176.89px;top:768.42px;font-size:12.50px;line-height:12.50px;color:#000;font-weight:normal;transform:scaleX(1.0277);transform-origin:0 0;">2019</div>
<div id="t158" class="t" style="left:308.46px;top:788.42px;font-size:12.50px;line-height:12.50px;color:#000;font-weight:normal;transform:scaleX(1.2409);transform-origin:0 0;">Mobil</div>
<div id="t159" class="t" style="left:1176.91px;top:788.42px;font-size:12.50px;line-height:12.50px;color:#000;font-weight:normal;transform:scaleX(1.0277);transform-origin:0 0;">2017</div>
<div id="t160" class="t" style="left:309.43px;top:808.42px;font-size:12.50px;line-height:12.50px;color:#000;font-weight:normal;transform:scaleX(1.0948);transform-origin:0 0;">Tanah dan/atau Bangunan Untuk Tempat Tinggal</div>
<div id="t161" class="t" style="left:1176.91px;top:808.42px;font-size:12.50px;line-height:12.50px;color:#000;font-weight:normal;transform:scaleX(1.0277);transform-origin:0 0;">2047</div>
<div class="b" style="left:693px;top:243px;width:404px;height:747px;overflow:hidden">
<div id="t162" class="t" style="left:1.30px;top:45.42px;font-size:12.50px;line-height:12.50px;color:#000;font-weight:normal;transform:scaleX(0.9962);transform-origin:0 0;">PERHIASAN</div>
<div id="t163" class="t" style="left:1.31px;top:65.42px;font-size:12.50px;line-height:12.50px;color:#000;font-weight:normal;transform:scaleX(0.9912);transform-origin:0 0;">RUKO ANGKASA RAYA NO 20 B JAKARTA &nbsp; HGB 09010101300725</div>
<div id="t164" class="t" style="left:1.27px;top:85.42px;font-size:12.50px;line-height:12.50px;color:#000;font-weight:normal;transform:scaleX(1.0276);transform-origin:0 0;">RUKO MAMPANG PRAPATAN &nbsp; &nbsp; &nbsp; HGB 09040000300476/477</div>
<div id="t165" class="t" style="left:1.28px;top:105.42px;font-size:12.50px;line-height:12.50px;color:#000;font-weight:normal;transform:scaleX(1.0160);transform-origin:0 0;">RUKO GOLDEN FATMAWATI HGB 09040701300320/321</div>
<div id="t166" class="t" style="left:1.29px;top:125.42px;font-size:12.50px;line-height:12.50px;color:#000;font-weight:normal;transform:scaleX(1.0135);transform-origin:0 0;">MITRA OASIS C21/02 HGB 466/XX/C</div>
<div id="t167" class="t" style="left:1.30px;top:145.42px;font-size:12.50px;line-height:12.50px;color:#000;font-weight:normal;">MOBIL HONDA CRV BPKB G-2280016</div>
<div id="t168" class="t" style="left:2.05px;top:185.42px;font-size:12.50px;line-height:12.50px;color:#000;font-weight:normal;">TANAH DANBANGUNAN JL PINTU AIR RAYA NO 20 C PASAR BARU SAWAH BESAR</div>
<div id="t169" class="t" style="left:1.35px;top:205.42px;font-size:12.50px;line-height:12.50px;color:#000;font-weight:normal;transform:scaleX(0.9539);transform-origin:0 0;">RIVER VALLEY RESIDENCE JL. AUTUMN HILLS NO 26 CIRENEDEU , CIPUTAT</div>
<div id="t170" class="t" style="left:1.76px;top:225.42px;font-size:12.50px;line-height:12.50px;color:#000;font-weight:normal;transform:scaleX(0.9755);transform-origin:0 0;">SEMUA REKENING</div>
<div id="t171" class="t" style="left:1.31px;top:245.42px;font-size:12.50px;line-height:12.50px;color:#000;font-weight:normal;transform:scaleX(0.9867);transform-origin:0 0;">PARTEMEN MENTENG PARK 27 GH, JAKARTA</div>
<div id="t172" class="t" style="left:2.30px;top:265.42px;font-size:12.50px;line-height:12.50px;color:#000;font-weight:normal;transform:scaleX(0.9745);transform-origin:0 0;">APARTEMEN RESIDENCE 8 SENOPATI 66BH, JAKARTA</div>
<div id="t173" class="t" style="left:1.29px;top:285.42px;font-size:12.50px;line-height:12.50px;color:#000;font-weight:normal;transform:scaleX(1.0063);transform-origin:0 0;">BANGUNAN JL PINTU AIR NO 45</div>
<div id="t174" class="t" style="left:1.66px;top:345.42px;font-size:12.50px;line-height:12.50px;color:#000;font-weight:normal;transform:scaleX(0.9428);transform-origin:0 0;">BCA</div>
<div id="t175" class="t" style="left:1.57px;top:365.42px;font-size:12.50px;line-height:12.50px;color:#000;font-weight:normal;transform:scaleX(1.0257);transform-origin:0 0;">RUMAH 31.74.010.004.004.0387.0</div>
<div id="t176" class="t" style="left:1.60px;top:385.42px;font-size:12.50px;line-height:12.50px;color:#000;font-weight:normal;transform:scaleX(0.9966);transform-origin:0 0;">B 2781 XI</div>
<div id="t177" class="t" style="left:1.60px;top:425.42px;font-size:12.50px;line-height:12.50px;color:#000;font-weight:normal;transform:scaleX(1.0025);transform-origin:0 0;">LTC GLODOK 31.74.050.006.009.1298.0</div>
<div id="t178" class="t" style="left:1.59px;top:445.42px;font-size:12.50px;line-height:12.50px;color:#000;font-weight:normal;transform:scaleX(1.0108);transform-origin:0 0;">KIOS BLOK K/L1/E-17</div>
<div id="t179" class="t" style="left:1.62px;top:465.42px;font-size:12.50px;line-height:12.50px;color:#000;font-weight:normal;transform:scaleX(0.9820);transform-origin:0 0;">BEI</div>
<div id="t180" class="t" style="left:2.05px;top:485.42px;font-size:12.50px;line-height:12.50px;color:#000;font-weight:normal;transform:scaleX(0.9979);transform-origin:0 0;">SEMUA TABUNGAN DAN ASET LANCAR LAINNYA</div>
<div id="t181" class="t" style="left:1.62px;top:505.42px;font-size:12.50px;line-height:12.50px;color:#000;font-weight:normal;transform:scaleX(0.9805);transform-origin:0 0;">HONDA CBR150 B 5690 BIJ</div>
<div id="t182" class="t" style="left:1.61px;top:525.42px;font-size:12.50px;line-height:12.50px;color:#000;font-weight:normal;transform:scaleX(0.9876);transform-origin:0 0;">HONDA BEAT B 4515 TJH</div>
<div id="t183" class="t" style="left:1.60px;top:545.42px;font-size:12.50px;line-height:12.50px;color:#000;font-weight:normal;transform:scaleX(0.9958);transform-origin:0 0;">HONDA HRV &nbsp; B 2804 BOU</div>
<div id="t184" class="t" style="left:1.57px;top:565.42px;font-size:12.50px;line-height:12.50px;color:#000;font-weight:normal;transform:scaleX(1.0257);transform-origin:0 0;">RUMAH 31.74.010.004.004.0398.0</div>
</div>
<div class="b" style="left:1096px;top:801px;width:190px;height:23px;border:2px solid #217346;box-sizing:border-box"></div>
<div class="b" style="left:1282px;top:819px;width:6px;height:6px;background:#217346;border:1px solid #fff;box-sizing:border-box"></div>
<div class="b" style="left:1283px;top:820px;width:4px;height:4px;background:#217346"></div>
<div class="b" style="left:1899px;top:224px;width:21px;height:767px;background:#e6e6e6"></div>
<div class="b" style="left:1902px;top:243px;width:15px;height:714px;background:#dadada"></div>
<div class="b" style="left:1902px;top:225px;width:15px;height:15px;background:#fff;border:1px solid #b4b4b4;box-sizing:border-box"></div>
<svg class="b" style="left:1905px;top:229px" width="9" height="6" viewBox="0 0 9 6"><path d="M0 5h8L4 0z" fill="#666"/></svg>
<div class="b" style="left:1902px;top:956px;width:15px;height:20px;background:#fff;border:1px solid #b4b4b4;border-bottom:2px solid #9a9a9a;box-sizing:border-box"></div>
<div class="b" style="left:1902px;top:976px;width:15px;height:15px;background:#fff;border:1px solid #b4b4b4;box-sizing:border-box"></div>
<svg class="b" style="left:1905px;top:981px" width="9" height="6" viewBox="0 0 9 6"><path d="M0 0h8L4 5z" fill="#666"/></svg>
<div class="b" style="left:0px;top:990px;width:1899px;height:1px;background:#9b9b9b"></div>
<div class="b" style="left:0px;top:991px;width:1920px;height:28px;background:#e6e6e6"></div>
<div class="b" style="left:0px;top:1018px;width:1920px;height:1px;background:#d6d6d6"></div>
<svg class="b" style="left:26px;top:999px" width="8" height="10" viewBox="0 0 8 10"><path d="M6 1v8L1 5z" fill="#c2c2c2"/></svg>
<svg class="b" style="left:55px;top:999px" width="8" height="10" viewBox="0 0 8 10"><path d="M1 1v8l5-4z" fill="#c2c2c2"/></svg>
<div class="b" style="left:100px;top:990px;width:92px;height:25px;background:#fff;border-left:1px solid #9b9b9b;border-right:1px solid #9b9b9b;box-sizing:border-box"></div>
<div class="b" style="left:100px;top:1012px;width:92px;height:3px;background:#217346"></div>
<div id="t185" class="t" style="left:111.71px;top:997.00px;font-size:13.00px;line-height:13.00px;color:#217346;font-weight:normal;transform:scaleX(0.9724);transform-origin:0 0;"><b>Rekap Aset</b></div>
<svg class="b" style="left:224px;top:995px" width="18" height="18" viewBox="0 0 18 18"><circle cx="9" cy="9" r="7.8" fill="none" stroke="#c8c8c8" stroke-width="1.3"/><path d="M9 5v8M5 9h8" stroke="#c8c8c8" stroke-width="1.3"/></svg>
<div class="b" style="left:1152px;top:999px;width:2px;height:2px;background:#b4b4b4"></div>
<div class="b" style="left:1152px;top:1003px;width:2px;height:2px;background:#b4b4b4"></div>
<div class="b" style="left:1152px;top:1007px;width:2px;height:2px;background:#b4b4b4"></div>
<div class="b" style="left:1169px;top:997px;width:730px;height:15px;background:#fff;border:1px solid #ababab;box-sizing:border-box"></div>
<div class="b" style="left:1820px;top:998px;width:64px;height:13px;background:#dadada"></div>
<div class="b" style="left:1884px;top:997px;width:15px;height:15px;background:#fff;border:1px solid #ababab;box-sizing:border-box"></div>
<svg class="b" style="left:1173px;top:1001px" width="6" height="8" viewBox="0 0 6 8"><path d="M5 0v7L0 3.5z" fill="#555"/></svg>
<div class="b" style="left:1183px;top:998px;width:1px;height:13px;background:#999"></div>
<svg class="b" style="left:1889px;top:1001px" width="6" height="8" viewBox="0 0 6 8"><path d="M0 0v7l5-3.5z" fill="#555"/></svg>
<div class="b" style="left:0px;top:1019px;width:1920px;height:21px;background:#f3f3f3"></div>
<div id="t186" class="t" style="left:7.62px;top:1022.34px;font-size:12.00px;line-height:12.00px;color:#333;font-weight:normal;transform:scaleX(0.9261);transform-origin:0 0;">Enter</div>
<svg class="b" style="left:1633px;top:1022px" width="14" height="14" viewBox="0 0 14 14"><path d="M.5 .5h12v12H.5zM4.5 .5v12M8.5 .5v12M.5 4.5h12M.5 8.5h12" fill="none" stroke="#666" stroke-width="1"/></svg>
<svg class="b" style="left:1673px;top:1022px" width="14" height="14" viewBox="0 0 14 14"><path d="M.5 .5h13v13H.5z" fill="none" stroke="#777"/><path d="M3.5 3.5h7v7h-7z" fill="none" stroke="#777"/><path d="M5 5.5h4M5 7.5h4M5 9h4" stroke="#777" stroke-width=".8"/></svg>
<svg class="b" style="left:1713px;top:1022px" width="14" height="14" viewBox="0 0 14 14"><path d="M.5 .5h13v13H.5zM.5 9.5h8V.5M4.5 .5v9" fill="none" stroke="#777"/></svg>
<div class="b" style="left:1746px;top:1028px;width:8px;height:1px;background:#b0b0b0"></div>
<div class="b" style="left:1758px;top:1029px;width:102px;height:1px;background:#b8b8b8"></div>
<div class="b" style="left:1809px;top:1026px;width:1px;height:6px;background:#b0b0b0"></div>
<div class="b" style="left:1864px;top:1028px;width:8px;height:1px;background:#b0b0b0"></div>
<div class="b" style="left:1867.5px;top:1025px;width:1px;height:8px;background:#b0b0b0"></div>
<div id="t187" class="t" style="left:1884.81px;top:1021.84px;font-size:12.00px;line-height:12.00px;color:#b6b6b6;font-weight:normal;transform:scaleX(0.8784);transform-origin:0 0;">100%</div>
<div class="b" style="left:0px;top:1040px;width:1920px;height:40px;background:#dfdada"></div>
<svg class="b" style="left:16px;top:1052px" width="16" height="16" viewBox="0 0 16 16"><path d="M0 2.2l6.5-.9v6.2H0zM7.3 1.2L16 0v7.5H7.3zM0 8.3h6.5v6.3L0 13.7zM7.3 8.3H16V16l-8.7-1.2z" fill="#111"/></svg>
<div class="b" style="left:49px;top:1040px;width:287px;height:40px;background:#fff;border:1px solid #d0d0d0;box-sizing:border-box"></div>
<svg class="b" style="left:59px;top:1051px" width="18" height="18" viewBox="0 0 18 18"><circle cx="10.5" cy="7" r="5.3" fill="none" stroke="#333" stroke-width="1.3"/><path d="M6.8 10.8L1.2 16.5" stroke="#333" stroke-width="1.4"/></svg>
<div id="t188" class="t" style="left:88.27px;top:1053.73px;font-size:14.50px;line-height:14.50px;color:#474747;font-weight:normal;">Type here to search</div>
<svg class="b" style="left:255px;top:1040px" width="81" height="40" viewBox="0 0 81 40"><defs><linearGradient id="sand" x1="0" y1="0" x2="0" y2="1"><stop offset="0" stop-color="#efe0bd"/><stop offset="1" stop-color="#d6b27a"/></linearGradient></defs><path d="M6 40C12 33 40 31 58 32c10 .5 18 2 22 4v4z" fill="url(#sand)"/><path d="M13 15C13 11 16 5 19.5 2.5l1.5-.5c4 4 11 9.5 17 11.5l20 1.5c3 1 3.5 6 .5 9.5l-.5 15h-2l-1.5-13-3 .5 1 12.5h-2l-2-12c-4 1.5-9 1.5-12-.5l-.5 12.5h-2l-1-12-1 12h-2l-.5-13c-2.5-3.5-6-7-9-8.5-2 .5-4 .5-5-.5z" fill="#f2f2f6" stroke="#8a8aa0" stroke-width=".5"/><path d="M19 3l3 3M21 2.5l4 4.5M24 5l4 5M27 7.5l4 5M30 9.5l3 4.5M33 11.5l2 3" stroke="#2a2a44" stroke-width="1.6"/><path d="M22 9l4 8M26 11l4 9M30 13l3 12M35 14.5l2 12M40 15l1.5 12M45 15l1 11M50 15.5l-1 9M55 16l-3 7M22 14l3 4" stroke="#3a3a58" stroke-width="1.3"/><path d="M58.5 15.5c2 4 4 10 6.5 16" fill="none" stroke="#3a3a55" stroke-width="2"/><circle cx="14" cy="16" r="1.6" fill="#222"/></svg>
<div class="b" style="left:343px;top:1078px;width:40px;height:2px;background:#0067c0"></div>
<div class="b" style="left:392px;top:1078px;width:40px;height:2px;background:#0067c0"></div>
<div class="b" style="left:441px;top:1078px;width:40px;height:2px;background:#0067c0"></div>
<div class="b" style="left:490px;top:1078px;width:40px;height:2px;background:#0067c0"></div>
<div class="b" style="left:535px;top:1078px;width:45px;height:2px;background:#0067c0"></div>
<div class="b" style="left:588px;top:1078px;width:40px;height:2px;background:#0067c0"></div>
<div class="b" style="left:637px;top:1078px;width:40px;height:2px;background:#0067c0"></div>
<div class="b" style="left:686px;top:1078px;width:40px;height:2px;background:#0067c0"></div>
<div class="b" style="left:535px;top:1040px;width:45px;height:38px;background:#f3f0ef"></div>
<svg class="b" style="left:350px;top:1047px" width="26" height="26" viewBox="0 0 26 26"><defs><linearGradient id="eg" x1="0" y1="0" x2="1" y2=".6"><stop offset="0" stop-color="#1aa3e6"/><stop offset=".55" stop-color="#2fc6b0"/><stop offset="1" stop-color="#55de6c"/></linearGradient><linearGradient id="eb" x1="0" y1="0" x2="1" y2="1"><stop offset="0" stop-color="#1e90e2"/><stop offset="1" stop-color="#0b3f90"/></linearGradient></defs><circle cx="13" cy="13" r="12" fill="url(#eb)"/><path d="M13.5 1C20 1 25 5.5 25 11.5c0 3.5-2.5 6-6.5 6-3 0-5-1.5-5-3.5 0-1 .5-1.6 1-2.2-3-1.8-8-.5-10.5 3.5C3 17 2.5 20 3 22 1.5 19.8 1 17 1 14 1 6.5 6.5 1 13.5 1z" fill="url(#eg)"/><path d="M25.5 15.5c-.8 3-3 6.5-5 8.5l6 2z" fill="#dfdada"/><ellipse cx="14.2" cy="13.8" rx="2.7" ry="2.3" fill="#d9f3fb"/></svg>
<svg class="b" style="left:399px;top:1047px" width="30" height="28" viewBox="0 0 30 28"><circle cx="13" cy="13" r="12" fill="#db4437"/><path d="M13 13L2.6 19A12 12 0 0 0 13 25z" fill="#0f9d58"/><path d="M2.6 19A12 12 0 0 1 2.6 7L13 13z" fill="#0f9d58"/><path d="M13 13h12a12 12 0 0 1-12 12z" fill="#ffcd40"/><path d="M25 13A12 12 0 0 0 23.4 7H13z" fill="#ffcd40"/><circle cx="13" cy="13" r="5.5" fill="#fff"/><circle cx="13" cy="13" r="4.3" fill="#4285f4"/><circle cx="21.5" cy="20" r="7.5" fill="#7e57c2" stroke="#e2dedd" stroke-width="1"/><path d="M19 24l2.5-7.5L24 24M20 21.5h3" fill="none" stroke="#fff" stroke-width="1.2"/></svg>
<svg class="b" style="left:448px;top:1047px" width="26" height="26" viewBox="0 0 26 26"><defs><radialGradient id="ff" cx=".35" cy=".3" r=".9"><stop offset="0" stop-color="#ffe14d"/><stop offset=".45" stop-color="#ff8a1f"/><stop offset="1" stop-color="#e6224d"/></radialGradient></defs><circle cx="13" cy="14" r="11.5" fill="url(#ff)"/><circle cx="13.5" cy="13.5" r="5.5" fill="#7a3bd8"/><path d="M7 6c3-2 8-2 11 1 2 2 3 5 2 8-1-3-4-5-7-5-2 0-4 1-5 2 0-2 0-4-1-6z" fill="#ffb62e"/></svg>
<svg class="b" style="left:496px;top:1049px" width="25" height="22" viewBox="0 0 25 22"><path d="M1 3.5h8l2 2h13v15H1z" fill="#f8c940"/><rect x="3" y="1" width="7" height="3" fill="#d9a81e"/><path d="M5 9h15v9h-4v-5H9v5H5z" fill="#1e88e5"/><rect x="9" y="13" width="7" height="5" fill="#f8c940"/></svg>
<svg class="b" style="left:546px;top:1048px" width="26" height="23" viewBox="0 0 26 23"><rect x="6" y="1" width="19" height="21" rx="1.5" fill="#107c41"/><rect x="15" y="1" width="10" height="7" fill="#33c481"/><rect x="15" y="8" width="10" height="7" fill="#21a366"/><rect x="6" y="1" width="9" height="7" fill="#21a366"/><rect x="15" y="15" width="10" height="7" fill="#185c37"/><rect x="1" y="5.5" width="12" height="12" rx="1.3" fill="#107c41"/><path d="M4 8.5l6 6M10 8.5l-6 6" stroke="#fff" stroke-width="1.7"/></svg>
<svg class="b" style="left:595px;top:1048px" width="26" height="23" viewBox="0 0 26 23"><rect x="6" y="1" width="19" height="21" rx="1.5" fill="#185abd"/><rect x="6" y="1" width="19" height="6" fill="#41a5ee"/><rect x="6" y="7" width="19" height="6" fill="#2b7cd3"/><rect x="1" y="5.5" width="12" height="12" rx="1.3" fill="#185abd"/><path d="M3 8.5l1.8 6.5 2.2-5.5 2.2 5.5 1.8-6.5" fill="none" stroke="#fff" stroke-width="1.3"/></svg>
<svg class="b" style="left:647px;top:1050px" width="20" height="20" viewBox="0 0 20 20"><g transform="translate(9.5,9.7)"><circle r="5.6" fill="none" stroke="#3a3a3a" stroke-width="3.4"/><g fill="#3a3a3a"><rect x="-2" y="-9.3" width="4" height="4" transform="rotate(0)"/><rect x="-2" y="-9.3" width="4" height="4" transform="rotate(45)"/><rect x="-2" y="-9.3" width="4" height="4" transform="rotate(90)"/><rect x="-2" y="-9.3" width="4" height="4" transform="rotate(135)"/><rect x="-2" y="-9.3" width="4" height="4" transform="rotate(180)"/><rect x="-2" y="-9.3" width="4" height="4" transform="rotate(225)"/><rect x="-2" y="-9.3" width="4" height="4" transform="rotate(270)"/><rect x="-2" y="-9.3" width="4" height="4" transform="rotate(315)"/></g></g></svg>
<svg class="b" style="left:695px;top:1049px" width="22" height="21" viewBox="0 0 22 21"><rect x="0" y="0" width="21.5" height="21" rx="3.5" fill="#d40f0f"/><path d="M10 4c-1 0-1 2 0 5 1 3 3 6 6 7.5 1.5.7 2.5.3 2.5-.5 0-1-2-1.5-4-1.5-3 0-6 1-8 3-1.5 1.5-2.5 1-2-.2.8-2 3.5-5 4.5-8.5.8-2.5 1-4.8 1-4.8z" fill="none" stroke="#fff" stroke-width="1.2"/></svg>
<svg class="b" style="left:1558px;top:1047px" width="28" height="26" viewBox="0 0 28 26"><path d="M5 24c-3 0-5-2-5-4.5S2 15 5 15c.5-4 3.5-6.5 7-6.5 3 0 5.5 2 6.5 5 3 0 5.5 2.5 5.5 5.5s-2.5 5-5.5 5z" fill="#8ec2f0" transform="translate(2,-1)"/><circle cx="20" cy="7" r="6.2" fill="#d62828"/><text x="20" y="10" font-family="Liberation Sans" font-size="8.5" font-weight="bold" fill="#fff" text-anchor="middle">5</text></svg>
<div id="t189" class="t" style="left:1591.99px;top:1053.47px;font-size:13.50px;line-height:13.50px;color:#222;font-weight:normal;transform:scaleX(0.9770);transform-origin:0 0;">30°C</div>
<div id="t190" class="t" style="left:1629.55px;top:1053.47px;font-size:13.50px;line-height:13.50px;color:#222;font-weight:normal;">Berawan</div>
<svg class="b" style="left:1706px;top:1055px" width="15" height="10" viewBox="0 0 15 10"><path d="M1 8.5l6.5-6.5L14 8.5" fill="none" stroke="#222" stroke-width="1.3"/></svg>
<svg class="b" style="left:1731px;top:1052px" width="14" height="17" viewBox="0 0 14 17"><rect x="1.5" y="4.5" width="7" height="8" rx="1" fill="none" stroke="#222" stroke-width="1.2"/><path d="M8.5 7l4-2v7l-4-2" fill="none" stroke="#222" stroke-width="1.2"/><path d="M3 2.5a6 6 0 0 1 6 0M3 14.5a6 6 0 0 0 6 0" fill="none" stroke="#555" stroke-width="1"/></svg>
<svg class="b" style="left:1752px;top:1053px" width="19" height="16" viewBox="0 0 19 16"><rect x="3.5" y="2.5" width="14" height="9" fill="none" stroke="#222" stroke-width="1.2"/><rect x="0.5" y="0.5" width="5" height="4" fill="#e2dedd" stroke="#222" stroke-width="1"/><path d="M10.5 11.5v3M6 14.5h9" stroke="#222" stroke-width="1.2"/></svg>
<svg class="b" style="left:1776px;top:1053px" width="18" height="15" viewBox="0 0 18 15"><path d="M1.5 5h3l4-3.5v12l-4-3.5h-3z" fill="none" stroke="#222" stroke-width="1.2"/><path d="M11 4.5a4 4 0 0 1 0 6M13.5 2.5a7 7 0 0 1 0 10" fill="none" stroke="#777" stroke-width="1.1"/></svg>
<div id="t191" class="t" style="left:1818.12px;top:1044.20px;font-size:13.00px;line-height:13.00px;color:#222;font-weight:normal;transform:scaleX(0.8367);transform-origin:0 0;">14:49</div>
<div id="t192" class="t" style="left:1802.43px;top:1062.20px;font-size:13.00px;line-height:13.00px;color:#222;font-weight:normal;transform:scaleX(0.9028);transform-origin:0 0;">31/01/2026</div>
<svg class="b" style="left:1877px;top:1051px" width="28" height="26" viewBox="0 0 28 26"><path d="M2 2h17v12h-9l-4 3.5V14H2z" fill="#111"/><path d="M5 5.5h11M5 8h11M5 10.5h7" stroke="#e2dedd" stroke-width="1.1"/><circle cx="17.5" cy="17.5" r="7" fill="#e2dedd" stroke="#444" stroke-width="1"/><text x="17.5" y="21.5" font-family="Liberation Sans" font-size="11" fill="#222" text-anchor="middle">3</text></svg>
<div class="b" style="left:1915px;top:1040px;width:1px;height:40px;background:#c8c4c3"></div></body></html>
